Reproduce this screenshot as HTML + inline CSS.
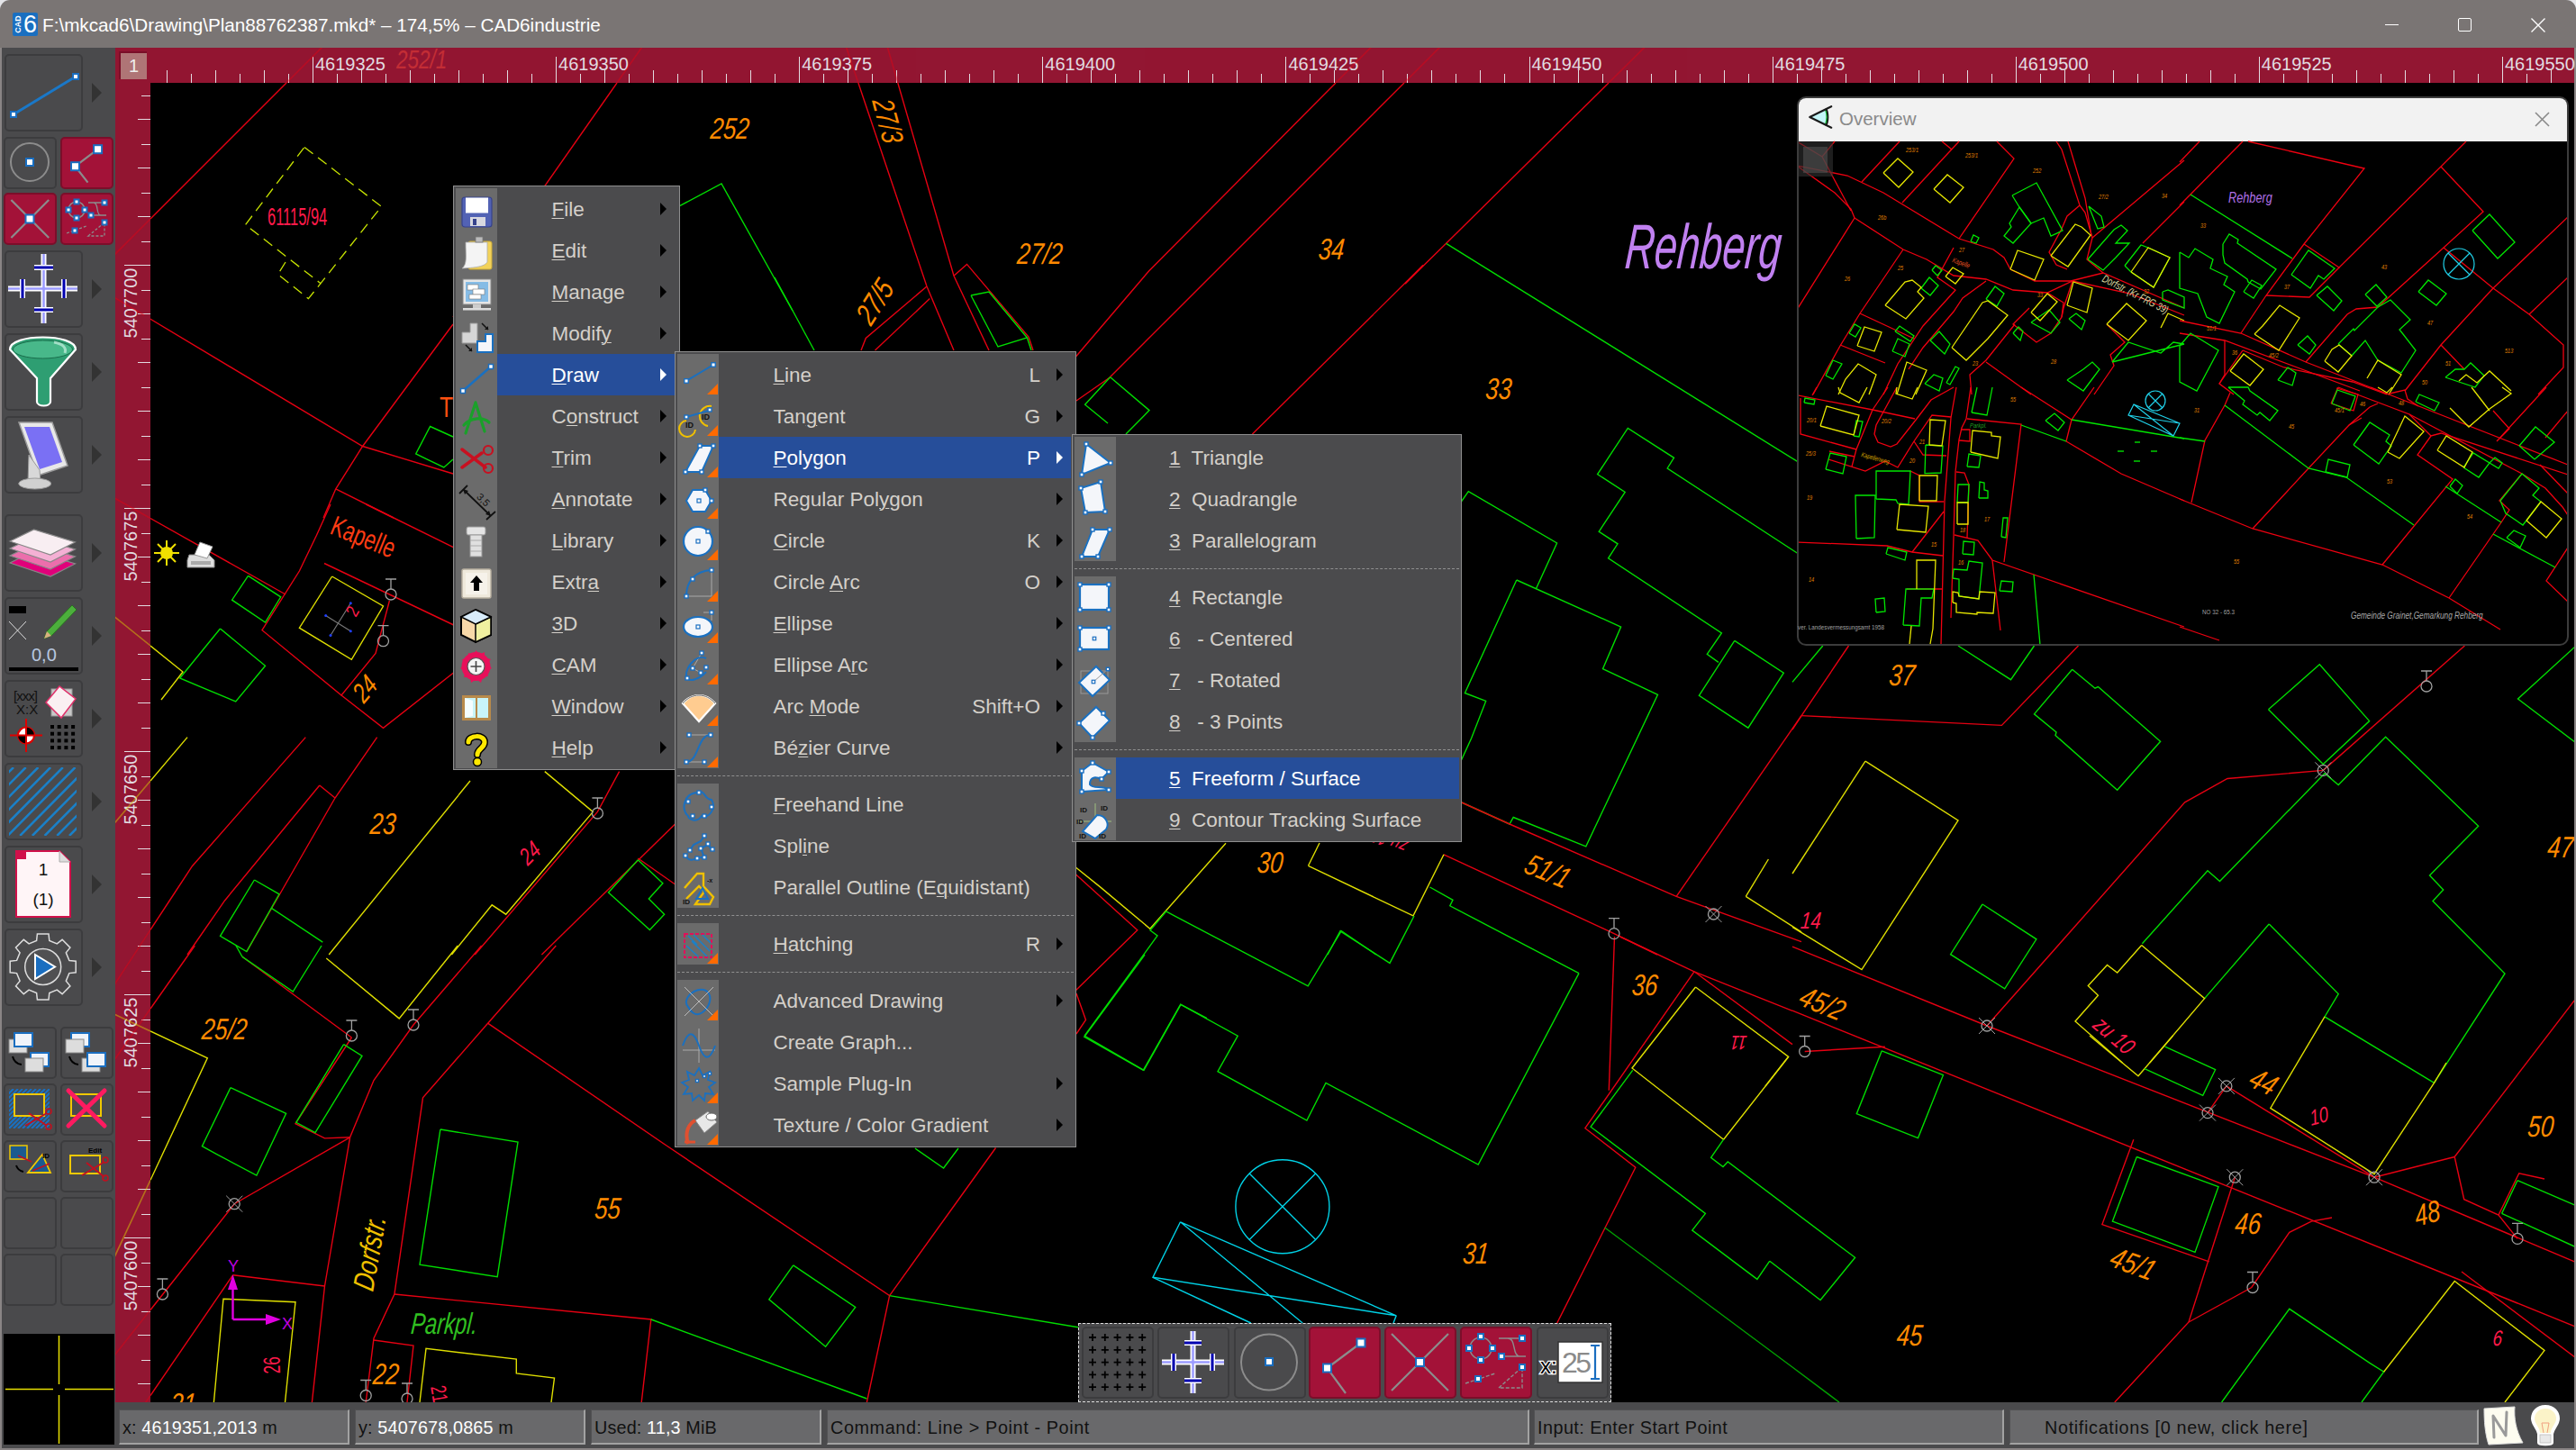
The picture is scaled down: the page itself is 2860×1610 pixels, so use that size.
<!DOCTYPE html><html><head><meta charset="utf-8"><style>*{box-sizing:border-box;margin:0;padding:0}
html,body{width:2860px;height:1610px;overflow:hidden;background:#e4e4e8;font-family:"Liberation Sans",sans-serif}
.a{position:absolute}
#win{position:absolute;left:0;top:0;width:2860px;height:1610px;background:#7a7574;border-radius:11px 11px 0 0;overflow:hidden}
#title{left:47px;top:15px;font-size:20.7px;color:#fff;white-space:pre;line-height:26px}
svg{position:absolute;overflow:visible}
.fld{position:absolute;top:7px;height:39px;background:#69696b;border-style:solid;border-width:1px 2px 2px 1px;border-color:#515153 #a2a2a2 #a2a2a2 #515153;font-size:19.8px;color:#111;white-space:pre;line-height:38px;padding-left:3px}
.menu{position:absolute;background:#4b4b4d;border:1px solid #8e8e8e}
.strip{position:absolute;width:46px;background:#6b6b6b}
.mi{position:absolute;height:46px;color:#d4d0ca;font-size:22.5px;line-height:48px;white-space:pre}
.mi.hl{background:#264e9a;color:#fff}
.mi u{text-decoration:underline;text-underline-offset:2px;text-decoration-thickness:1px}
.arr{position:absolute;top:16px;width:0;height:0;border-top:7px solid transparent;border-bottom:7px solid transparent;border-left:7px solid #000}
.hl .arr{border-left-color:#fff}
.sc{position:absolute;white-space:pre}
.sep{position:absolute;height:0;border-top:1px dashed #909090}
.btn{position:absolute;background:#4a4a4c;border:2px solid #3e3e40;border-radius:4px}
.btn.r{background:#a31238;border-color:#84102e}
.tarr{position:absolute;left:102px;width:0;height:0;border-top:12px solid transparent;border-bottom:12px solid transparent;border-left:12px solid #333}
.fld b{font-weight:normal;color:#fff}
.fld:last-child{}
</style></head><body><div id="win"><div class="a" id="title">F:\mkcad6\Drawing\Plan88762387.mkd* – 174,5% – CAD6industrie</div><div class="a" style="left:14px;top:14px;width:28px;height:26px;background:#1a6fc0;border-radius:2px"></div><div class="a" style="left:14px;top:14px;width:28px;height:26px;overflow:hidden"><div class="a" style="left:-4px;top:8px;width:20px;font-size:9px;font-weight:bold;color:#fff;transform:rotate(-90deg);text-align:center">CAD</div><div class="a" style="left:12px;top:-2px;font-size:27px;color:#fff;line-height:30px">6</div></div><div class="a" style="left:2648px;top:27px;width:15px;height:1px;background:#fff"></div><div class="a" style="left:2729px;top:20px;width:15px;height:15px;border:1.5px solid #fff;border-radius:2px"></div><svg style="left:2810px;top:20px" width="16" height="16"><path d="M0.5 0.5L15.5 15.5M15.5 0.5L0.5 15.5" stroke="#fff" stroke-width="1.4"/></svg><div class="a" style="left:0;top:53px;width:2px;height:1557px;background:#8a8585"></div><div class="a" style="left:2858px;top:53px;width:2px;height:1557px;background:#8a8585"></div><div class="a" style="left:0;top:1608px;width:2860px;height:2px;background:#8a8585"></div><div class="a" style="left:2px;top:53px;width:126px;height:1555px;background:#4a4a4c"></div><div class="a" style="left:128px;top:53px;width:2730px;height:39px;background:#921632"></div><div class="a" style="left:128px;top:92px;width:39px;height:1465px;background:#921632"></div><div class="a" id="canvas" style="left:167px;top:92px;width:2691px;height:1465px;background:#000;overflow:hidden"></div><div class="a" style="left:128px;top:1557px;width:2730px;height:51px;background:#4a4a4c"></div><svg style="left:0;top:0" width="2860" height="1610"><line x1="185.5" y1="78" x2="185.5" y2="92" stroke="#e2dbe0" stroke-width="1"/><line x1="212.5" y1="82" x2="212.5" y2="92" stroke="#e2dbe0" stroke-width="1"/><line x1="239.5" y1="78" x2="239.5" y2="92" stroke="#e2dbe0" stroke-width="1"/><line x1="266.5" y1="82" x2="266.5" y2="92" stroke="#e2dbe0" stroke-width="1"/><line x1="293.5" y1="78" x2="293.5" y2="92" stroke="#e2dbe0" stroke-width="1"/><line x1="320.5" y1="82" x2="320.5" y2="92" stroke="#e2dbe0" stroke-width="1"/><line x1="347.5" y1="63" x2="347.5" y2="92" stroke="#e2dbe0" stroke-width="1"/><text x="350.0" y="77.5" font-size="20" fill="#e2dbe0" font-family="Liberation Sans">4619325</text><line x1="374.5" y1="82" x2="374.5" y2="92" stroke="#e2dbe0" stroke-width="1"/><line x1="401.5" y1="78" x2="401.5" y2="92" stroke="#e2dbe0" stroke-width="1"/><line x1="428.5" y1="82" x2="428.5" y2="92" stroke="#e2dbe0" stroke-width="1"/><line x1="455.5" y1="78" x2="455.5" y2="92" stroke="#e2dbe0" stroke-width="1"/><line x1="482.5" y1="82" x2="482.5" y2="92" stroke="#e2dbe0" stroke-width="1"/><line x1="509.5" y1="78" x2="509.5" y2="92" stroke="#e2dbe0" stroke-width="1"/><line x1="536.5" y1="82" x2="536.5" y2="92" stroke="#e2dbe0" stroke-width="1"/><line x1="563.5" y1="78" x2="563.5" y2="92" stroke="#e2dbe0" stroke-width="1"/><line x1="590.5" y1="82" x2="590.5" y2="92" stroke="#e2dbe0" stroke-width="1"/><line x1="617.5" y1="63" x2="617.5" y2="92" stroke="#e2dbe0" stroke-width="1"/><text x="620.1" y="77.5" font-size="20" fill="#e2dbe0" font-family="Liberation Sans">4619350</text><line x1="644.5" y1="82" x2="644.5" y2="92" stroke="#e2dbe0" stroke-width="1"/><line x1="671.5" y1="78" x2="671.5" y2="92" stroke="#e2dbe0" stroke-width="1"/><line x1="698.5" y1="82" x2="698.5" y2="92" stroke="#e2dbe0" stroke-width="1"/><line x1="725.5" y1="78" x2="725.5" y2="92" stroke="#e2dbe0" stroke-width="1"/><line x1="752.5" y1="82" x2="752.5" y2="92" stroke="#e2dbe0" stroke-width="1"/><line x1="779.5" y1="78" x2="779.5" y2="92" stroke="#e2dbe0" stroke-width="1"/><line x1="806.5" y1="82" x2="806.5" y2="92" stroke="#e2dbe0" stroke-width="1"/><line x1="833.5" y1="78" x2="833.5" y2="92" stroke="#e2dbe0" stroke-width="1"/><line x1="860.5" y1="82" x2="860.5" y2="92" stroke="#e2dbe0" stroke-width="1"/><line x1="887.5" y1="63" x2="887.5" y2="92" stroke="#e2dbe0" stroke-width="1"/><text x="890.2" y="77.5" font-size="20" fill="#e2dbe0" font-family="Liberation Sans">4619375</text><line x1="914.5" y1="82" x2="914.5" y2="92" stroke="#e2dbe0" stroke-width="1"/><line x1="941.5" y1="78" x2="941.5" y2="92" stroke="#e2dbe0" stroke-width="1"/><line x1="968.5" y1="82" x2="968.5" y2="92" stroke="#e2dbe0" stroke-width="1"/><line x1="995.5" y1="78" x2="995.5" y2="92" stroke="#e2dbe0" stroke-width="1"/><line x1="1022.5" y1="82" x2="1022.5" y2="92" stroke="#e2dbe0" stroke-width="1"/><line x1="1049.5" y1="78" x2="1049.5" y2="92" stroke="#e2dbe0" stroke-width="1"/><line x1="1076.5" y1="82" x2="1076.5" y2="92" stroke="#e2dbe0" stroke-width="1"/><line x1="1103.5" y1="78" x2="1103.5" y2="92" stroke="#e2dbe0" stroke-width="1"/><line x1="1130.5" y1="82" x2="1130.5" y2="92" stroke="#e2dbe0" stroke-width="1"/><line x1="1157.5" y1="63" x2="1157.5" y2="92" stroke="#e2dbe0" stroke-width="1"/><text x="1160.3" y="77.5" font-size="20" fill="#e2dbe0" font-family="Liberation Sans">4619400</text><line x1="1184.5" y1="82" x2="1184.5" y2="92" stroke="#e2dbe0" stroke-width="1"/><line x1="1211.5" y1="78" x2="1211.5" y2="92" stroke="#e2dbe0" stroke-width="1"/><line x1="1238.5" y1="82" x2="1238.5" y2="92" stroke="#e2dbe0" stroke-width="1"/><line x1="1265.5" y1="78" x2="1265.5" y2="92" stroke="#e2dbe0" stroke-width="1"/><line x1="1292.5" y1="82" x2="1292.5" y2="92" stroke="#e2dbe0" stroke-width="1"/><line x1="1319.5" y1="78" x2="1319.5" y2="92" stroke="#e2dbe0" stroke-width="1"/><line x1="1346.5" y1="82" x2="1346.5" y2="92" stroke="#e2dbe0" stroke-width="1"/><line x1="1373.5" y1="78" x2="1373.5" y2="92" stroke="#e2dbe0" stroke-width="1"/><line x1="1400.5" y1="82" x2="1400.5" y2="92" stroke="#e2dbe0" stroke-width="1"/><line x1="1427.5" y1="63" x2="1427.5" y2="92" stroke="#e2dbe0" stroke-width="1"/><text x="1430.4" y="77.5" font-size="20" fill="#e2dbe0" font-family="Liberation Sans">4619425</text><line x1="1454.5" y1="82" x2="1454.5" y2="92" stroke="#e2dbe0" stroke-width="1"/><line x1="1481.5" y1="78" x2="1481.5" y2="92" stroke="#e2dbe0" stroke-width="1"/><line x1="1508.5" y1="82" x2="1508.5" y2="92" stroke="#e2dbe0" stroke-width="1"/><line x1="1535.5" y1="78" x2="1535.5" y2="92" stroke="#e2dbe0" stroke-width="1"/><line x1="1562.5" y1="82" x2="1562.5" y2="92" stroke="#e2dbe0" stroke-width="1"/><line x1="1589.5" y1="78" x2="1589.5" y2="92" stroke="#e2dbe0" stroke-width="1"/><line x1="1616.5" y1="82" x2="1616.5" y2="92" stroke="#e2dbe0" stroke-width="1"/><line x1="1643.5" y1="78" x2="1643.5" y2="92" stroke="#e2dbe0" stroke-width="1"/><line x1="1670.5" y1="82" x2="1670.5" y2="92" stroke="#e2dbe0" stroke-width="1"/><line x1="1698.5" y1="63" x2="1698.5" y2="92" stroke="#e2dbe0" stroke-width="1"/><text x="1700.5" y="77.5" font-size="20" fill="#e2dbe0" font-family="Liberation Sans">4619450</text><line x1="1725.5" y1="82" x2="1725.5" y2="92" stroke="#e2dbe0" stroke-width="1"/><line x1="1752.5" y1="78" x2="1752.5" y2="92" stroke="#e2dbe0" stroke-width="1"/><line x1="1779.5" y1="82" x2="1779.5" y2="92" stroke="#e2dbe0" stroke-width="1"/><line x1="1806.5" y1="78" x2="1806.5" y2="92" stroke="#e2dbe0" stroke-width="1"/><line x1="1833.5" y1="82" x2="1833.5" y2="92" stroke="#e2dbe0" stroke-width="1"/><line x1="1860.5" y1="78" x2="1860.5" y2="92" stroke="#e2dbe0" stroke-width="1"/><line x1="1887.5" y1="82" x2="1887.5" y2="92" stroke="#e2dbe0" stroke-width="1"/><line x1="1914.5" y1="78" x2="1914.5" y2="92" stroke="#e2dbe0" stroke-width="1"/><line x1="1941.5" y1="82" x2="1941.5" y2="92" stroke="#e2dbe0" stroke-width="1"/><line x1="1968.5" y1="63" x2="1968.5" y2="92" stroke="#e2dbe0" stroke-width="1"/><text x="1970.6" y="77.5" font-size="20" fill="#e2dbe0" font-family="Liberation Sans">4619475</text><line x1="1995.5" y1="82" x2="1995.5" y2="92" stroke="#e2dbe0" stroke-width="1"/><line x1="2022.5" y1="78" x2="2022.5" y2="92" stroke="#e2dbe0" stroke-width="1"/><line x1="2049.5" y1="82" x2="2049.5" y2="92" stroke="#e2dbe0" stroke-width="1"/><line x1="2076.5" y1="78" x2="2076.5" y2="92" stroke="#e2dbe0" stroke-width="1"/><line x1="2103.5" y1="82" x2="2103.5" y2="92" stroke="#e2dbe0" stroke-width="1"/><line x1="2130.5" y1="78" x2="2130.5" y2="92" stroke="#e2dbe0" stroke-width="1"/><line x1="2157.5" y1="82" x2="2157.5" y2="92" stroke="#e2dbe0" stroke-width="1"/><line x1="2184.5" y1="78" x2="2184.5" y2="92" stroke="#e2dbe0" stroke-width="1"/><line x1="2211.5" y1="82" x2="2211.5" y2="92" stroke="#e2dbe0" stroke-width="1"/><line x1="2238.5" y1="63" x2="2238.5" y2="92" stroke="#e2dbe0" stroke-width="1"/><text x="2240.7" y="77.5" font-size="20" fill="#e2dbe0" font-family="Liberation Sans">4619500</text><line x1="2265.5" y1="82" x2="2265.5" y2="92" stroke="#e2dbe0" stroke-width="1"/><line x1="2292.5" y1="78" x2="2292.5" y2="92" stroke="#e2dbe0" stroke-width="1"/><line x1="2319.5" y1="82" x2="2319.5" y2="92" stroke="#e2dbe0" stroke-width="1"/><line x1="2346.5" y1="78" x2="2346.5" y2="92" stroke="#e2dbe0" stroke-width="1"/><line x1="2373.5" y1="82" x2="2373.5" y2="92" stroke="#e2dbe0" stroke-width="1"/><line x1="2400.5" y1="78" x2="2400.5" y2="92" stroke="#e2dbe0" stroke-width="1"/><line x1="2427.5" y1="82" x2="2427.5" y2="92" stroke="#e2dbe0" stroke-width="1"/><line x1="2454.5" y1="78" x2="2454.5" y2="92" stroke="#e2dbe0" stroke-width="1"/><line x1="2481.5" y1="82" x2="2481.5" y2="92" stroke="#e2dbe0" stroke-width="1"/><line x1="2508.5" y1="63" x2="2508.5" y2="92" stroke="#e2dbe0" stroke-width="1"/><text x="2510.8" y="77.5" font-size="20" fill="#e2dbe0" font-family="Liberation Sans">4619525</text><line x1="2535.5" y1="82" x2="2535.5" y2="92" stroke="#e2dbe0" stroke-width="1"/><line x1="2562.5" y1="78" x2="2562.5" y2="92" stroke="#e2dbe0" stroke-width="1"/><line x1="2589.5" y1="82" x2="2589.5" y2="92" stroke="#e2dbe0" stroke-width="1"/><line x1="2616.5" y1="78" x2="2616.5" y2="92" stroke="#e2dbe0" stroke-width="1"/><line x1="2643.5" y1="82" x2="2643.5" y2="92" stroke="#e2dbe0" stroke-width="1"/><line x1="2670.5" y1="78" x2="2670.5" y2="92" stroke="#e2dbe0" stroke-width="1"/><line x1="2697.5" y1="82" x2="2697.5" y2="92" stroke="#e2dbe0" stroke-width="1"/><line x1="2724.5" y1="78" x2="2724.5" y2="92" stroke="#e2dbe0" stroke-width="1"/><line x1="2751.5" y1="82" x2="2751.5" y2="92" stroke="#e2dbe0" stroke-width="1"/><line x1="2778.5" y1="63" x2="2778.5" y2="92" stroke="#e2dbe0" stroke-width="1"/><text x="2780.9" y="77.5" font-size="20" fill="#e2dbe0" font-family="Liberation Sans">4619550</text><line x1="2805.5" y1="82" x2="2805.5" y2="92" stroke="#e2dbe0" stroke-width="1"/><line x1="2832.5" y1="78" x2="2832.5" y2="92" stroke="#e2dbe0" stroke-width="1"/><line x1="157" y1="106.5" x2="167" y2="106.5" stroke="#e2dbe0" stroke-width="1"/><line x1="153" y1="132.5" x2="167" y2="132.5" stroke="#e2dbe0" stroke-width="1"/><line x1="157" y1="160.5" x2="167" y2="160.5" stroke="#e2dbe0" stroke-width="1"/><line x1="153" y1="186.5" x2="167" y2="186.5" stroke="#e2dbe0" stroke-width="1"/><line x1="157" y1="214.5" x2="167" y2="214.5" stroke="#e2dbe0" stroke-width="1"/><line x1="153" y1="240.5" x2="167" y2="240.5" stroke="#e2dbe0" stroke-width="1"/><line x1="157" y1="268.5" x2="167" y2="268.5" stroke="#e2dbe0" stroke-width="1"/><line x1="138" y1="294.5" x2="167" y2="294.5" stroke="#e2dbe0" stroke-width="1"/><text transform="translate(151.5,297.5) rotate(-90)" text-anchor="end" font-size="20" fill="#e2dbe0" font-family="Liberation Sans">5407700</text><line x1="157" y1="322.5" x2="167" y2="322.5" stroke="#e2dbe0" stroke-width="1"/><line x1="153" y1="348.5" x2="167" y2="348.5" stroke="#e2dbe0" stroke-width="1"/><line x1="157" y1="376.5" x2="167" y2="376.5" stroke="#e2dbe0" stroke-width="1"/><line x1="153" y1="402.5" x2="167" y2="402.5" stroke="#e2dbe0" stroke-width="1"/><line x1="157" y1="430.5" x2="167" y2="430.5" stroke="#e2dbe0" stroke-width="1"/><line x1="153" y1="456.5" x2="167" y2="456.5" stroke="#e2dbe0" stroke-width="1"/><line x1="157" y1="484.5" x2="167" y2="484.5" stroke="#e2dbe0" stroke-width="1"/><line x1="153" y1="510.5" x2="167" y2="510.5" stroke="#e2dbe0" stroke-width="1"/><line x1="157" y1="538.5" x2="167" y2="538.5" stroke="#e2dbe0" stroke-width="1"/><line x1="138" y1="564.5" x2="167" y2="564.5" stroke="#e2dbe0" stroke-width="1"/><text transform="translate(151.5,567.5) rotate(-90)" text-anchor="end" font-size="20" fill="#e2dbe0" font-family="Liberation Sans">5407675</text><line x1="157" y1="592.5" x2="167" y2="592.5" stroke="#e2dbe0" stroke-width="1"/><line x1="153" y1="618.5" x2="167" y2="618.5" stroke="#e2dbe0" stroke-width="1"/><line x1="157" y1="646.5" x2="167" y2="646.5" stroke="#e2dbe0" stroke-width="1"/><line x1="153" y1="672.5" x2="167" y2="672.5" stroke="#e2dbe0" stroke-width="1"/><line x1="157" y1="700.5" x2="167" y2="700.5" stroke="#e2dbe0" stroke-width="1"/><line x1="153" y1="726.5" x2="167" y2="726.5" stroke="#e2dbe0" stroke-width="1"/><line x1="157" y1="754.5" x2="167" y2="754.5" stroke="#e2dbe0" stroke-width="1"/><line x1="153" y1="780.5" x2="167" y2="780.5" stroke="#e2dbe0" stroke-width="1"/><line x1="157" y1="808.5" x2="167" y2="808.5" stroke="#e2dbe0" stroke-width="1"/><line x1="138" y1="834.5" x2="167" y2="834.5" stroke="#e2dbe0" stroke-width="1"/><text transform="translate(151.5,837.5) rotate(-90)" text-anchor="end" font-size="20" fill="#e2dbe0" font-family="Liberation Sans">5407650</text><line x1="157" y1="862.5" x2="167" y2="862.5" stroke="#e2dbe0" stroke-width="1"/><line x1="153" y1="888.5" x2="167" y2="888.5" stroke="#e2dbe0" stroke-width="1"/><line x1="157" y1="916.5" x2="167" y2="916.5" stroke="#e2dbe0" stroke-width="1"/><line x1="153" y1="942.5" x2="167" y2="942.5" stroke="#e2dbe0" stroke-width="1"/><line x1="157" y1="970.5" x2="167" y2="970.5" stroke="#e2dbe0" stroke-width="1"/><line x1="153" y1="996.5" x2="167" y2="996.5" stroke="#e2dbe0" stroke-width="1"/><line x1="157" y1="1024.5" x2="167" y2="1024.5" stroke="#e2dbe0" stroke-width="1"/><line x1="153" y1="1050.5" x2="167" y2="1050.5" stroke="#e2dbe0" stroke-width="1"/><line x1="157" y1="1078.5" x2="167" y2="1078.5" stroke="#e2dbe0" stroke-width="1"/><line x1="138" y1="1104.5" x2="167" y2="1104.5" stroke="#e2dbe0" stroke-width="1"/><text transform="translate(151.5,1107.5) rotate(-90)" text-anchor="end" font-size="20" fill="#e2dbe0" font-family="Liberation Sans">5407625</text><line x1="157" y1="1132.5" x2="167" y2="1132.5" stroke="#e2dbe0" stroke-width="1"/><line x1="153" y1="1158.5" x2="167" y2="1158.5" stroke="#e2dbe0" stroke-width="1"/><line x1="157" y1="1186.5" x2="167" y2="1186.5" stroke="#e2dbe0" stroke-width="1"/><line x1="153" y1="1212.5" x2="167" y2="1212.5" stroke="#e2dbe0" stroke-width="1"/><line x1="157" y1="1240.5" x2="167" y2="1240.5" stroke="#e2dbe0" stroke-width="1"/><line x1="153" y1="1266.5" x2="167" y2="1266.5" stroke="#e2dbe0" stroke-width="1"/><line x1="157" y1="1294.5" x2="167" y2="1294.5" stroke="#e2dbe0" stroke-width="1"/><line x1="153" y1="1320.5" x2="167" y2="1320.5" stroke="#e2dbe0" stroke-width="1"/><line x1="157" y1="1348.5" x2="167" y2="1348.5" stroke="#e2dbe0" stroke-width="1"/><line x1="138" y1="1374.5" x2="167" y2="1374.5" stroke="#e2dbe0" stroke-width="1"/><text transform="translate(151.5,1377.5) rotate(-90)" text-anchor="end" font-size="20" fill="#e2dbe0" font-family="Liberation Sans">5407600</text><line x1="157" y1="1402.5" x2="167" y2="1402.5" stroke="#e2dbe0" stroke-width="1"/><line x1="153" y1="1428.5" x2="167" y2="1428.5" stroke="#e2dbe0" stroke-width="1"/><line x1="157" y1="1456.5" x2="167" y2="1456.5" stroke="#e2dbe0" stroke-width="1"/><line x1="153" y1="1482.5" x2="167" y2="1482.5" stroke="#e2dbe0" stroke-width="1"/><line x1="157" y1="1510.5" x2="167" y2="1510.5" stroke="#e2dbe0" stroke-width="1"/><line x1="153" y1="1536.5" x2="167" y2="1536.5" stroke="#e2dbe0" stroke-width="1"/></svg><div class="a" style="left:132px;top:57px;width:31px;height:31px;background:#b07677;border:2px solid #7a1028;border-width:2px 0 0 2px;color:#eee;font-size:20px;text-align:center;line-height:29px">1</div><svg style="left:0;top:0" width="2860" height="1610"><defs><clipPath id="rl"><path d="M128 53H2858V92H167V1557H128Z"/></clipPath></defs><g clip-path="url(#rl)" opacity="0.45" stroke-width="1.6"><line x1="167.0" y1="243.0" x2="82.1" y2="327.9" stroke="#e60012"/><line x1="318.0" y1="92.0" x2="402.9" y2="7.1" stroke="#e60012"/><line x1="160.0" y1="350.0" x2="57.1" y2="288.3" stroke="#e60012"/><line x1="685.0" y1="92.0" x2="753.8" y2="-6.3" stroke="#e60012"/><line x1="952.9" y1="92.0" x2="914.6" y2="-21.7" stroke="#e60012"/><line x1="996.8" y1="92.0" x2="963.4" y2="-23.2" stroke="#e60012"/><line x1="1483.0" y1="92.0" x2="1567.5" y2="6.8" stroke="#e60012"/><line x1="1559.0" y1="92.0" x2="1643.8" y2="7.1" stroke="#e60012"/><line x1="1786.0" y1="92.0" x2="1871.3" y2="7.6" stroke="#e60012"/><line x1="167.0" y1="575.5" x2="62.4" y2="516.6" stroke="#e60012"/><line x1="167.0" y1="717.0" x2="73.5" y2="641.7" stroke="#dede00"/><line x1="167.0" y1="867.0" x2="89.4" y2="958.6" stroke="#dede00"/><line x1="167.0" y1="1032.4" x2="101.2" y2="1132.7" stroke="#e60012"/><line x1="167.0" y1="1120.0" x2="97.9" y2="1218.1" stroke="#e60012"/><line x1="167.0" y1="1454.5" x2="92.5" y2="1548.6" stroke="#e60012"/><line x1="167.0" y1="1145.0" x2="58.5" y2="1093.7" stroke="#dede00"/><line x1="167.0" y1="1310.3" x2="116.2" y2="1419.0" stroke="#dede00"/><line x1="167.0" y1="1549.5" x2="99.2" y2="1648.5" stroke="#e60012"/><text transform="translate(440,76) scale(0.75,1)" font-family="Liberation Sans" font-style="italic" font-size="30" fill="#ff4a3a">252/1</text></g></svg><svg style="left:0;top:0" width="2860" height="1610"><defs><clipPath id="cv"><rect x="167" y="92" width="2691" height="1465"/></clipPath></defs><g clip-path="url(#cv)" fill="none" stroke-width="1.4" stroke-linejoin="miter"><polyline stroke="#e60012" points="167.0,243.0 318.0,92.0"/><polyline stroke="#e60012" points="160.0,350.0 402.6,495.5 503.0,526.0"/><polyline stroke="#e60012" points="685.0,92.0 503.0,352.0"/><polyline stroke="#e60012" points="503.0,360.0 402.6,495.5 372.8,542.8 359.0,575.0"/><polyline stroke="#e60012" points="372.8,542.8 437.0,575.0"/><polyline stroke="#00dc00" points="754.6,228.6 801.0,204.0 880.0,345.0"/><polyline stroke="#00dc00" points="503.0,485.0 477.6,473.5 461.7,504.0 492.8,519.0 503.0,510.0"/><polyline stroke="#e60012" points="952.9,92.0 1029.0,318.0 1059.0,389.0"/><polyline stroke="#e60012" points="996.8,92.0 1059.0,306.3 1098.0,389.0"/><polyline stroke="#e60012" points="1059.0,306.3 1073.5,293.4 1142.0,374.0 1147.0,389.0"/><polyline stroke="#e60012" points="1029.0,318.0 961.3,375.5 956.0,389.0"/><polyline stroke="#e60012" points="1032.3,331.6 971.5,389.0"/><polyline stroke="#00dc00" points="860.0,308.0 904.0,389.0"/><polyline stroke="#00dc00" points="1078.0,328.0 1098.0,324.0 1140.4,375.0 1108.0,385.0 1078.0,328.0"/><polyline stroke="#00dc00" points="1140.4,375.0 1145.0,389.0"/><polyline stroke="#e60012" points="1483.0,92.0 1275.5,301.0 1194.5,396.0"/><polyline stroke="#e60012" points="1559.0,92.0 1231.6,419.5 1195.0,445.0"/><polyline stroke="#e60012" points="1580.0,294.5 1390.4,482.0"/><polyline stroke="#00dc00" points="1232.6,418.8 1276.0,455.6 1250.0,482.0"/><polyline stroke="#00dc00" points="1232.6,418.8 1204.6,449.2 1230.0,470.0"/><polyline stroke="#e60012" points="1786.0,92.0 1605.6,270.3 1560.0,314.9"/><polyline stroke="#e60012" points="1580.0,294.5 1560.0,314.9"/><polyline stroke="#00dc00" points="1605.6,270.3 1996.0,512.7"/><polyline stroke="#00dc00" points="1995.2,614.0 1851.2,520.0 1858.5,508.3 1807.3,475.4 1773.6,526.6 1804.2,546.4 1775.2,590.3 1796.0,603.8 1785.6,619.8 1911.4,703.0 1895.3,726.4 1907.9,735.4"/><polyline stroke="#e60012" points="167.0,575.5 317.0,660.0"/><polyline stroke="#e60012" points="367.0,560.0 351.4,594.5 332.4,634.0 291.0,699.7 379.0,772.0 417.0,725.5 432.4,667.0"/><polyline stroke="#e60012" points="360.0,625.5 504.8,694.5"/><polyline stroke="#e60012" points="406.6,560.0 504.8,608.3"/><polyline stroke="#dede00" points="368.6,640.0 425.5,673.0 390.3,732.4 332.4,697.2 368.6,640.0"/><polyline stroke="#00dc00" points="275.5,639.3 311.7,662.8 294.5,691.0 257.6,666.2 275.5,639.3"/><polyline stroke="#00dc00" points="244.5,698.0 294.5,739.3 261.7,779.0 199.7,753.0 244.5,698.0"/><polyline stroke="#dede00" points="167.0,717.0 203.0,746.0 179.0,777.0"/><polyline stroke="#dede00" points="208.0,818.6 167.0,867.0"/><polyline stroke="#e60012" points="504.8,746.0 425.5,808.3 379.0,772.0"/><polyline stroke="#e60012" points="339.3,818.6 213.4,961.7 187.6,1001.0 167.0,1032.4"/><polyline stroke="#e60012" points="418.6,818.6 372.0,886.0 311.7,991.0 273.8,1056.6"/><polyline stroke="#e60012" points="354.8,872.0 372.0,886.0"/><polyline stroke="#e60012" points="354.8,872.0 249.7,999.7 208.0,1060.0"/><polyline stroke="#00dc00" points="282.4,977.0 310.0,992.8 273.8,1056.6 244.5,1039.3 282.4,977.0"/><polyline stroke="#00dc00" points="301.4,1008.3 358.3,1046.2"/><polyline stroke="#dede00" points="522.0,867.0 365.2,1060.0"/><polyline stroke="#dede00" points="604.8,856.6 658.3,901.4 561.7,1015.2 546.2,1004.8 501.4,1060.0"/><polyline stroke="#e60012" points="687.6,856.6 663.4,901.4 527.2,1060.0"/><polyline stroke="#e60012" points="760.0,904.8 601.4,1060.0"/><polyline stroke="#00dc00" points="708.3,954.8 735.9,980.7 720.3,998.0 737.6,1015.2 721.4,1032.4 675.5,991.0 708.3,954.8"/><polyline stroke="#e60012" points="708.3,953.0 760.0,989.3"/><polyline stroke="#00dc00" points="1621.0,559.0 1630.3,545.6 1728.6,603.0 1705.3,654.0"/><polyline stroke="#00dc00" points="1683.8,644.0 1799.6,696.0 1779.5,742.6 1840.5,771.3 1760.8,939.8 1680.2,907.5 1676.0,915.0 1622.8,891.0"/><polyline stroke="#00dc00" points="1683.8,644.0 1626.4,769.5 1649.7,778.4 1633.6,819.7 1622.0,845.0"/><polyline stroke="#00dc00" points="1925.8,711.4 1980.3,747.2 1940.9,808.2 1886.4,772.3 1925.8,711.4"/><polyline stroke="#e60012" points="1861.2,995.4 2000.0,794.6"/><polyline stroke="#e60012" points="1622.8,891.0 1676.0,915.0 1861.2,995.4 2000.0,1045.6"/><polyline stroke="#e60012" points="1603.0,948.8 1792.0,1036.6 1840.0,1060.0"/><polyline stroke="#dede00" points="1452.5,961.3 1569.0,1016.9 1603.0,948.8"/><polyline stroke="#dede00" points="1452.5,961.3 1465.0,936.0"/><polyline stroke="#dede00" points="1194.3,963.0 1221.2,984.6 1276.8,1031.2 1361.0,936.2"/><polyline stroke="#e60012" points="1194.3,970.7 1262.8,1032.8 1194.3,1099.7"/><polyline stroke="#00dc00" points="1204.0,1150.2 1285.0,1039.0 1277.0,1033.0 1294.6,1012.0 1452.2,1094.9 1488.8,1034.4 1543.0,1069.4 1570.0,1017.0"/><polyline stroke="#00dc00" points="1587.5,985.0 1613.0,999.4 1609.8,1005.8 1753.0,1080.6"/><polyline stroke="#00dc00" points="1488.4,1033.0 1474.0,1060.0"/><polyline stroke="#00dc00" points="1488.4,1033.0 1527.8,1060.0"/><polyline stroke="#dede00" points="1938.3,995.4 1963.4,954.0"/><polyline stroke="#dede00" points="1938.3,995.4 2000.0,1034.8"/><polyline stroke="#e60012" points="2052.5,717.0 2000.1,794.6 1990.0,810.0"/><polyline stroke="#e60012" points="2000.1,794.6 2222.4,805.4 2307.5,717.0"/><polyline stroke="#00dc00" points="2174.0,717.0 2232.5,754.7 2258.5,717.0"/><polyline stroke="#00dc00" points="1990.0,757.4 2023.8,717.0"/><polyline stroke="#00dc00" points="2300.7,743.2 2326.0,764.2 2329.4,762.5 2398.6,823.3 2350.7,877.3 2282.0,816.5 2283.0,813.0 2258.5,792.9 2300.7,743.2"/><polyline stroke="#dede00" points="2071.0,845.2 2174.0,911.0 2067.0,1076.6 1990.0,1029.3"/><polyline stroke="#dede00" points="2071.0,845.2 1990.0,970.0"/><polyline stroke="#00dc00" points="2201.0,1004.0 2260.9,1042.8 2225.7,1097.8 2165.6,1059.7 2201.0,1004.0"/><polyline stroke="#e60012" points="2579.3,855.4 2736.4,717.0"/><polyline stroke="#e60012" points="2579.3,855.4 2473.0,864.5 2425.7,890.8 2206.0,1139.0"/><polyline stroke="#e60012" points="1990.0,1051.2 2206.0,1139.0 2636.0,1307.2 2860.0,1401.6"/><polyline stroke="#e60012" points="1990.0,1122.2 2860.0,1473.2"/><polyline stroke="#00dc00" points="2518.5,787.8 2575.3,737.8 2630.6,800.6 2579.3,848.6 2518.5,787.8"/><polyline stroke="#00dc00" points="2378.4,1047.8 2451.0,966.8 2464.5,978.6 2581.0,858.7 2596.2,871.6 2648.6,818.2 2751.6,917.2 2697.5,971.9 2712.7,988.0 2701.0,1000.6 2781.0,1081.0 2702.5,1202.4"/><polyline stroke="#00dc00" points="2519.2,1026.0 2596.2,1103.6 2581.0,1128.9 2702.5,1202.4"/><polyline stroke="#00dc00" points="2519.2,1026.0 2447.6,1108.6"/><polyline stroke="#dede00" points="2377.7,1049.5 2447.6,1108.6 2386.8,1180.0"/><polyline stroke="#dede00" points="2377.7,1049.5 2350.7,1080.0 2339.5,1071.5 2318.3,1094.5 2329.4,1105.3 2304.0,1134.0 2356.4,1180.0"/><polyline stroke="#dede00" points="2581.0,1128.9 2520.8,1230.4 2636.0,1303.7 2702.5,1202.4 2716.0,1180.0"/><polyline stroke="#00dc00" points="2860.0,717.0 2795.5,776.0 2860.0,825.0"/><polyline stroke="#e60012" points="2860.0,1108.6 2725.2,1284.5"/><polyline stroke="#e60012" points="216.3,1050.0 167.0,1120.0"/><polyline stroke="#e60012" points="269.0,1062.3 390.4,1152.0"/><polyline stroke="#00dc00" points="269.0,1062.3 325.3,1101.0 357.0,1050.0"/><polyline stroke="#00dc00" points="262.0,1050.0 269.0,1062.3"/><polyline stroke="#dede00" points="362.3,1064.0 443.2,1130.9 508.2,1050.0"/><polyline stroke="#e60012" points="534.6,1050.0 459.0,1138.0 415.0,1199.5 388.6,1262.8 360.5,1428.0 346.4,1557.0"/><polyline stroke="#e60012" points="617.3,1050.0 541.6,1136.2 469.5,1218.8 437.9,1437.0 415.0,1486.0 406.2,1557.0"/><polyline stroke="#e60012" points="541.6,1136.2 740.0,1272.0"/><polyline stroke="#e60012" points="388.6,1262.8 260.2,1336.7 167.0,1454.5"/><polyline stroke="#e60012" points="388.6,1262.8 360.5,1263.9 328.0,1247.7 390.4,1152.0"/><polyline stroke="#00dc00" points="381.6,1159.7 402.0,1172.4 350.0,1257.5 328.8,1246.3 381.6,1159.7"/><polyline stroke="#00dc00" points="256.0,1207.6 317.6,1236.4 284.9,1305.0 240.2,1281.4 224.4,1272.7 256.0,1207.6"/><polyline stroke="#dede00" points="167.0,1145.0 230.3,1174.9 167.0,1310.3"/><polyline stroke="#00dc00" points="488.9,1254.0 575.0,1268.0 552.2,1417.6 466.0,1404.2 488.9,1254.0"/><polyline stroke="#e60012" points="437.9,1437.0 722.8,1465.0 712.2,1557.0"/><polyline stroke="#e60012" points="258.5,1415.8 360.5,1428.0"/><polyline stroke="#e60012" points="258.5,1415.8 167.0,1549.5"/><polyline stroke="#dede00" points="237.4,1557.0 248.0,1442.2 328.0,1445.7 316.5,1557.0"/><polyline stroke="#e60012" points="415.0,1488.0 459.0,1494.0 452.0,1557.0"/><polyline stroke="#dede00" points="466.0,1557.0 473.0,1497.4 573.3,1509.0 573.3,1525.0 615.5,1530.0 612.0,1557.0"/><polyline stroke="#e60012" points="740.0,1272.0 987.6,1438.6 1105.5,1274.5"/><polyline stroke="#e60012" points="987.6,1438.6 962.4,1557.0"/><polyline stroke="#00dc00" points="987.6,1438.6 1197.0,1473.8"/><polyline stroke="#00dc00" points="722.8,1465.0 962.4,1553.0"/><polyline stroke="#00dc00" points="880.7,1404.8 949.7,1451.4 916.6,1495.2 853.8,1442.8 880.7,1404.8"/><polyline stroke="#00dc00" points="1015.9,1275.0 1047.6,1297.0 1064.0,1275.0"/><polyline stroke="#00dc00" points="1271.0,1060.0 1203.8,1151.4 1269.3,1188.3 1310.7,1115.2 1340.0,1130.7"/><polyline stroke="#e60012" points="1195.0,1103.0 1205.5,1132.4 1195.0,1148.0"/><polyline stroke="#00dc00" points="1204.0,1150.2 1270.0,1188.4 1311.0,1115.5 1374.2,1150.2 1352.0,1189.7 1450.9,1244.0 1472.0,1202.4 1641.2,1293.0 1753.0,1080.6"/><polyline stroke="#00d2e6" points="1310.5,1356.8 1280.0,1418.3 1550.2,1460.8 1310.5,1356.8 1446.2,1469.0"/><polyline stroke="#00d2e6" points="1280.0,1418.3 1388.8,1469.0"/><polyline stroke="#00d2e6" points="1550.2,1460.8 1547.0,1469.0"/><polyline stroke="#e60012" points="1792.5,1040.0 1786.3,1210.8"/><polyline stroke="#e60012" points="1798.7,1040.0 1881.0,1078.8 1990.0,1122.3"/><polyline stroke="#e60012" points="1881.0,1078.8 1990.0,1159.6"/><polyline stroke="#e60012" points="1881.0,1078.8 1759.9,1252.7 1815.8,1296.2 1728.8,1469.0 1724.0,1557.0"/><polyline stroke="#dede00" points="1882.5,1096.0 1985.7,1173.5 1913.6,1265.2 1812.0,1186.0 1882.5,1096.0"/><polyline stroke="#00dc00" points="1812.7,1188.4 1766.1,1251.2 1893.4,1347.5 1878.8,1366.0 1950.9,1420.4 1964.8,1400.2"/><polyline stroke="#00dc00" points="1913.6,1265.2 1899.6,1285.3 1913.0,1295.6 1918.3,1290.0 2059.6,1396.3 2021.1,1443.5 1964.8,1400.2"/><polyline stroke="#00a000" points="1781.6,1363.0 1990.0,1518.0"/><polyline stroke="#e60012" points="2636.0,1307.2 2725.2,1284.5"/><polyline stroke="#e60012" points="2725.2,1284.5 2735.7,1331.7 2774.0,1349.0 2795.0,1375.4"/><polyline stroke="#e60012" points="2774.0,1349.0 2796.8,1302.7 2825.0,1309.0"/><polyline stroke="#e60012" points="2471.9,1205.9 2636.0,1307.2"/><polyline stroke="#e60012" points="2471.9,1205.9 2451.0,1235.6"/><polyline stroke="#e60012" points="2003.7,1167.5 2092.8,1162.2"/><polyline stroke="#e60012" points="2368.8,1265.3 2333.9,1359.6 2452.7,1400.9"/><polyline stroke="#e60012" points="2481.3,1307.2 2430.0,1468.0 2347.8,1557.0"/><polyline stroke="#e60012" points="2430.0,1468.0 2499.8,1429.5 2541.8,1368.4 2566.2,1356.1 2589.0,1352.0"/><polyline stroke="#e60012" points="2733.0,1412.0 2860.0,1508.0"/><polyline stroke="#00dc00" points="2089.3,1166.8 2157.4,1193.7 2129.5,1263.6 2061.3,1236.7 2089.3,1166.8"/><polyline stroke="#00dc00" points="2372.3,1284.5 2463.0,1317.7 2437.0,1390.4 2345.4,1356.1 2372.3,1284.5"/><polyline stroke="#00a000" points="1990.0,1518.0 2042.0,1557.0"/><polyline stroke="#00dc00" points="2466.6,1557.0 2541.8,1453.3 2630.9,1513.4 2646.6,1523.2 2622.0,1557.0"/><polyline stroke="#dede00" points="2646.6,1523.2 2725.2,1422.5 2825.0,1499.4 2781.0,1557.0"/><polyline stroke="#dede00" points="2320.0,1150.0 2374.0,1194.7 2412.5,1150.0"/><polyline stroke="#00dc00" points="2403.7,1162.2 2459.6,1187.7 2445.7,1216.4 2381.0,1186.7"/><polyline stroke="#dede00" points="1960.0,1206.0 1985.2,1173.8"/><polyline stroke="#00dc00" points="2795.0,1310.7 2860.0,1338.7"/><polyline stroke="#00dc00" points="2777.6,1347.4 2860.0,1384.8"/><polyline stroke="#00dc00" points="2795.0,1310.7 2777.6,1347.4"/><polyline stroke="#c8e400" stroke-width="1.3" stroke-dasharray="12,7" points="338,163.4 423.5,229.3 356,314.7 272.5,249.5 338,163.4"/><polyline stroke="#c8e400" stroke-width="1.3" stroke-dasharray="12,7" points="317,291 308.6,304.6 342.4,331.6 356,314.7"/><circle cx="1423.9" cy="1339.7" r="52" stroke="#00d2e6"/><path d="M1387.1 1302.9L1460.7 1376.5M1460.7 1302.9L1387.1 1376.5" stroke="#00d2e6"/><path d="M361.7 683.4L389.3 700.7M367 705.5L389.3 669.7" stroke="#777" stroke-width="1.2"/><circle cx="361.7" cy="683.4" r="1.5" fill="#2040ff"/><circle cx="389.3" cy="700.7" r="1.5" fill="#2040ff"/><circle cx="367" cy="705.5" r="1.5" fill="#2040ff"/><circle cx="389.3" cy="669.7" r="1.5" fill="#2040ff"/><text transform="translate(395,686) rotate(-60) scale(0.8,1)" font-family="Liberation Sans" font-size="20" fill="#ff1a4a">2</text><text transform="translate(478,1540) rotate(80) scale(0.7,1)" font-family="Liberation Sans" font-size="24" fill="#ff1a4a">21</text><circle cx="434" cy="660" r="6" stroke="#a0a0a0" stroke-width="1.3"/><path d="M434 654V643M428 643H440" stroke="#a0a0a0" stroke-width="1.3"/><circle cx="425.5" cy="711.7" r="6" stroke="#a0a0a0" stroke-width="1.3"/><path d="M425.5 705.7V694.7M419.5 694.7H431.5" stroke="#a0a0a0" stroke-width="1.3"/><circle cx="663.4" cy="903" r="6" stroke="#a0a0a0" stroke-width="1.3"/><path d="M663.4 897V886M657.4 886H669.4" stroke="#a0a0a0" stroke-width="1.3"/><circle cx="390.4" cy="1150" r="6" stroke="#a0a0a0" stroke-width="1.3"/><path d="M390.4 1144V1133M384.4 1133H396.4" stroke="#a0a0a0" stroke-width="1.3"/><circle cx="459" cy="1138" r="6" stroke="#a0a0a0" stroke-width="1.3"/><path d="M459 1132V1121M453 1121H465" stroke="#a0a0a0" stroke-width="1.3"/><circle cx="180.4" cy="1437" r="6" stroke="#a0a0a0" stroke-width="1.3"/><path d="M180.4 1431V1420M174.4 1420H186.4" stroke="#a0a0a0" stroke-width="1.3"/><circle cx="406.2" cy="1549.5" r="6" stroke="#a0a0a0" stroke-width="1.3"/><path d="M406.2 1543.5V1532.5M400.2 1532.5H412.2" stroke="#a0a0a0" stroke-width="1.3"/><circle cx="452" cy="1553" r="6" stroke="#a0a0a0" stroke-width="1.3"/><path d="M452 1547V1536M446 1536H458" stroke="#a0a0a0" stroke-width="1.3"/><circle cx="1792" cy="1036.6" r="6" stroke="#a0a0a0" stroke-width="1.3"/><path d="M1792 1030.6V1019.5999999999999M1786 1019.5999999999999H1798" stroke="#a0a0a0" stroke-width="1.3"/><circle cx="2003.7" cy="1167.5" r="6" stroke="#a0a0a0" stroke-width="1.3"/><path d="M2003.7 1161.5V1150.5M1997.7 1150.5H2009.7" stroke="#a0a0a0" stroke-width="1.3"/><circle cx="2501" cy="1429.5" r="6" stroke="#a0a0a0" stroke-width="1.3"/><path d="M2501 1423.5V1412.5M2495 1412.5H2507" stroke="#a0a0a0" stroke-width="1.3"/><circle cx="2795" cy="1375.4" r="6" stroke="#a0a0a0" stroke-width="1.3"/><path d="M2795 1369.4V1358.4M2789 1358.4H2801" stroke="#a0a0a0" stroke-width="1.3"/><circle cx="2694" cy="762" r="6" stroke="#a0a0a0" stroke-width="1.3"/><path d="M2694 756V745M2688 745H2700" stroke="#a0a0a0" stroke-width="1.3"/><circle cx="260.2" cy="1336.7" r="6" stroke="#a0a0a0" stroke-width="1.3"/><path d="M251.2 1327.7L269.2 1345.7M269.2 1327.7L251.2 1345.7" stroke="#a0a0a0" stroke-width="1"/><circle cx="1902.5" cy="1015" r="6" stroke="#a0a0a0" stroke-width="1.3"/><path d="M1893.5 1006L1911.5 1024M1911.5 1006L1893.5 1024" stroke="#a0a0a0" stroke-width="1"/><circle cx="2206" cy="1139" r="6" stroke="#a0a0a0" stroke-width="1.3"/><path d="M2197 1130L2215 1148M2215 1130L2197 1148" stroke="#a0a0a0" stroke-width="1"/><circle cx="2579.3" cy="855.4" r="6" stroke="#a0a0a0" stroke-width="1.3"/><path d="M2570.3 846.4L2588.3 864.4M2588.3 846.4L2570.3 864.4" stroke="#a0a0a0" stroke-width="1"/><circle cx="2471.9" cy="1205.9" r="6" stroke="#a0a0a0" stroke-width="1.3"/><path d="M2462.9 1196.9L2480.9 1214.9M2480.9 1196.9L2462.9 1214.9" stroke="#a0a0a0" stroke-width="1"/><circle cx="2451" cy="1235.6" r="6" stroke="#a0a0a0" stroke-width="1.3"/><path d="M2442 1226.6L2460 1244.6M2460 1226.6L2442 1244.6" stroke="#a0a0a0" stroke-width="1"/><circle cx="2481.3" cy="1307.2" r="6" stroke="#a0a0a0" stroke-width="1.3"/><path d="M2472.3 1298.2L2490.3 1316.2M2490.3 1298.2L2472.3 1316.2" stroke="#a0a0a0" stroke-width="1"/><circle cx="2636" cy="1307.2" r="6" stroke="#a0a0a0" stroke-width="1.3"/><path d="M2627 1298.2L2645 1316.2M2645 1298.2L2627 1316.2" stroke="#a0a0a0" stroke-width="1"/><text transform="translate(297,250) rotate(0) scale(0.61,1)" font-family="Liberation Sans" font-style="normal" font-size="27" fill="#ff1a4a" text-anchor="start">61115/94</text><text transform="translate(488,463) rotate(0) scale(0.8,1)" font-family="Liberation Sans" font-style="normal" font-size="31" fill="#ff5010" text-anchor="start">T</text><text transform="translate(788,154) rotate(0) scale(0.78,1) skewX(-7)" font-family="Liberation Sans" font-style="italic" font-size="33" fill="#ff8a00" text-anchor="start">252</text><text transform="translate(1128.6,292.8) rotate(0) scale(0.78,1) skewX(-7)" font-family="Liberation Sans" font-style="italic" font-size="33" fill="#ff8a00" text-anchor="start">27/2</text><text transform="translate(1463,288) rotate(0) scale(0.78,1) skewX(-7)" font-family="Liberation Sans" font-style="italic" font-size="33" fill="#ff8a00" text-anchor="start">34</text><text transform="translate(1648.6,442.7) rotate(0) scale(0.78,1) skewX(-7)" font-family="Liberation Sans" font-style="italic" font-size="33" fill="#ff8a00" text-anchor="start">33</text><text transform="translate(1803,298) rotate(0) scale(0.645,1) skewX(-7)" font-family="Liberation Sans" font-style="italic" font-size="70" fill="#c080f0" text-anchor="start">Rehberg</text><text transform="translate(968,112) rotate(75) scale(0.78,1) skewX(-7)" font-family="Liberation Sans" font-style="italic" font-size="33" fill="#ff8a00" text-anchor="start">27/3</text><text transform="translate(967,363) rotate(-58) scale(0.78,1) skewX(-7)" font-family="Liberation Sans" font-style="italic" font-size="33" fill="#ff8a00" text-anchor="start">27/5</text><text transform="translate(365,592) rotate(22) scale(0.72,1)" font-family="Liberation Sans" font-style="normal" font-size="31" fill="#ff3c14" text-anchor="start">Kapelle</text><text transform="translate(404,782) rotate(-50) scale(0.78,1) skewX(-7)" font-family="Liberation Sans" font-style="italic" font-size="30" fill="#ff8a00" text-anchor="start">24</text><text transform="translate(410,925.5) rotate(0) scale(0.78,1) skewX(-7)" font-family="Liberation Sans" font-style="italic" font-size="33" fill="#ff8a00" text-anchor="start">23</text><text transform="translate(586,962) rotate(-45) scale(0.78,1) skewX(-7)" font-family="Liberation Sans" font-style="italic" font-size="26" fill="#ff1a4a" text-anchor="start">24</text><text transform="translate(1395,968.5) rotate(0) scale(0.78,1) skewX(-7)" font-family="Liberation Sans" font-style="italic" font-size="33" fill="#ff8a00" text-anchor="start">30</text><text transform="translate(1690,968) rotate(22) scale(0.78,1) skewX(-7)" font-family="Liberation Sans" font-style="italic" font-size="33" fill="#ff8a00" text-anchor="start">51/1</text><text transform="translate(2096.4,760.8) rotate(0) scale(0.78,1) skewX(-7)" font-family="Liberation Sans" font-style="italic" font-size="33" fill="#ff8a00" text-anchor="start">37</text><text transform="translate(2827.6,951.6) rotate(0) scale(0.78,1) skewX(-7)" font-family="Liberation Sans" font-style="italic" font-size="33" fill="#ff8a00" text-anchor="start">47</text><text transform="translate(1995,1115) rotate(22) scale(0.78,1) skewX(-7)" font-family="Liberation Sans" font-style="italic" font-size="33" fill="#ff8a00" text-anchor="start">45/2</text><text transform="translate(1998.4,1031) rotate(0) scale(0.78,1) skewX(-7)" font-family="Liberation Sans" font-style="italic" font-size="26" fill="#ff1a4a" text-anchor="start">14</text><text transform="translate(2322,1140) rotate(40) scale(0.78,1) skewX(-7)" font-family="Liberation Sans" font-style="italic" font-size="26" fill="#ff1a4a" text-anchor="start">zu 10</text><text transform="translate(223.3,1153.8) rotate(0) scale(0.78,1) skewX(-7)" font-family="Liberation Sans" font-style="italic" font-size="33" fill="#ff8a00" text-anchor="start">25/2</text><text transform="translate(659.5,1352.5) rotate(0) scale(0.78,1) skewX(-7)" font-family="Liberation Sans" font-style="italic" font-size="33" fill="#ff8a00" text-anchor="start">55</text><text transform="translate(414,1435) rotate(-80) scale(0.78,1) skewX(-7)" font-family="Liberation Sans" font-style="italic" font-size="33" fill="#f0c000" text-anchor="start">Dorfstr.</text><text transform="translate(455.5,1481) rotate(0) scale(0.72,1) skewX(-7)" font-family="Liberation Sans" font-style="italic" font-size="33" fill="#30c020" text-anchor="start">Parkpl.</text><text transform="translate(413.3,1537) rotate(0) scale(0.78,1) skewX(-7)" font-family="Liberation Sans" font-style="italic" font-size="33" fill="#ff8a00" text-anchor="start">22</text><text transform="translate(188,1570) rotate(0) scale(0.78,1) skewX(-7)" font-family="Liberation Sans" font-style="italic" font-size="33" fill="#ff8a00" text-anchor="start">21</text><text transform="translate(311,1525) rotate(-92) scale(0.65,1)" font-family="Liberation Sans" font-style="normal" font-size="26" fill="#ff1a4a" text-anchor="start">26</text><text transform="translate(1811,1105) rotate(0) scale(0.78,1) skewX(-7)" font-family="Liberation Sans" font-style="italic" font-size="33" fill="#ff8a00" text-anchor="start">36</text><text transform="translate(1623.2,1403.4) rotate(0) scale(0.78,1) skewX(-7)" font-family="Liberation Sans" font-style="italic" font-size="33" fill="#ff8a00" text-anchor="start">31</text><text transform="translate(2494.6,1205) rotate(25) scale(0.78,1) skewX(-7)" font-family="Liberation Sans" font-style="italic" font-size="33" fill="#ff8a00" text-anchor="start">44</text><text transform="translate(2805.6,1261.8) rotate(0) scale(0.78,1) skewX(-7)" font-family="Liberation Sans" font-style="italic" font-size="33" fill="#ff8a00" text-anchor="start">50</text><text transform="translate(2566,1250) rotate(-15) scale(0.78,1) skewX(-7)" font-family="Liberation Sans" font-style="italic" font-size="24" fill="#ff1a4a" text-anchor="start">10</text><text transform="translate(2480.6,1370) rotate(0) scale(0.78,1) skewX(-7)" font-family="Liberation Sans" font-style="italic" font-size="33" fill="#ff8a00" text-anchor="start">46</text><text transform="translate(2683,1362) rotate(-15) scale(0.78,1) skewX(-7)" font-family="Liberation Sans" font-style="italic" font-size="33" fill="#ff8a00" text-anchor="start">48</text><text transform="translate(2340,1405) rotate(20) scale(0.78,1) skewX(-7)" font-family="Liberation Sans" font-style="italic" font-size="33" fill="#ff8a00" text-anchor="start">45/1</text><text transform="translate(2105,1494.2) rotate(0) scale(0.78,1) skewX(-7)" font-family="Liberation Sans" font-style="italic" font-size="33" fill="#ff8a00" text-anchor="start">45</text><text transform="translate(2767,1494.2) rotate(0) scale(0.78,1) skewX(-7)" font-family="Liberation Sans" font-style="italic" font-size="24" fill="#ff1a4a" text-anchor="start">6</text><text transform="translate(1940,1150) rotate(180) scale(0.78,1) skewX(-7)" font-family="Liberation Sans" font-style="italic" font-size="22" fill="#ff1a4a" text-anchor="start">11</text><text transform="translate(1565,934) rotate(200) scale(0.78,1) skewX(-7)" font-family="Liberation Sans" font-style="italic" font-size="22" fill="#ff1a4a" text-anchor="start">zu 15</text></g><path d="M258.5 1465V1420M258.5 1465H300" stroke="#e000e0" stroke-width="2.4" fill="none"/><path d="M253 1432L258.5 1415L264 1432Z M295 1459L312 1465L295 1471Z" fill="#e000e0"/><text transform="translate(253,1412) rotate(0) scale(1,1)" font-family="Liberation Sans" font-style="normal" font-size="18" fill="#c000e0" text-anchor="start">Y</text><text transform="translate(313,1476) rotate(0) scale(1,1)" font-family="Liberation Sans" font-style="normal" font-size="18" fill="#c000e0" text-anchor="start">X</text></svg><svg style="left:170px;top:598px" width="72" height="36"><g stroke="#f0e000" stroke-width="2"><path d="M15 2V30M1 16H29M5 6L25 26M25 6L5 26"/></g><circle cx="15" cy="16" r="7" fill="#f0e000"/><path d="M40 18L62 18L68 24V32H38V24Z" fill="#ddd" stroke="#888" stroke-width="1"/><path d="M46 18L52 4L66 9L60 22Z" fill="#fff" stroke="#999" stroke-width="1"/><rect x="42" y="25" width="22" height="4" fill="#aaa"/></svg><div class="a" style="left:5px;top:60px;width:87px;height:86px;background:#4a4a4c;border:2px solid #3c3c3e;border-radius:5px"></div><div class="a" style="left:102px;top:92px;width:0;height:0;border-top:11px solid transparent;border-bottom:11px solid transparent;border-left:11px solid #333"></div><div class="a" style="left:5px;top:278px;width:87px;height:86px;background:#4a4a4c;border:2px solid #3c3c3e;border-radius:5px"></div><div class="a" style="left:102px;top:310px;width:0;height:0;border-top:11px solid transparent;border-bottom:11px solid transparent;border-left:11px solid #333"></div><div class="a" style="left:5px;top:370px;width:87px;height:86px;background:#4a4a4c;border:2px solid #3c3c3e;border-radius:5px"></div><div class="a" style="left:102px;top:402px;width:0;height:0;border-top:11px solid transparent;border-bottom:11px solid transparent;border-left:11px solid #333"></div><div class="a" style="left:5px;top:462px;width:87px;height:86px;background:#4a4a4c;border:2px solid #3c3c3e;border-radius:5px"></div><div class="a" style="left:102px;top:494px;width:0;height:0;border-top:11px solid transparent;border-bottom:11px solid transparent;border-left:11px solid #333"></div><div class="a" style="left:5px;top:571px;width:87px;height:86px;background:#4a4a4c;border:2px solid #3c3c3e;border-radius:5px"></div><div class="a" style="left:102px;top:603px;width:0;height:0;border-top:11px solid transparent;border-bottom:11px solid transparent;border-left:11px solid #333"></div><div class="a" style="left:5px;top:663px;width:87px;height:86px;background:#4a4a4c;border:2px solid #3c3c3e;border-radius:5px"></div><div class="a" style="left:102px;top:695px;width:0;height:0;border-top:11px solid transparent;border-bottom:11px solid transparent;border-left:11px solid #333"></div><div class="a" style="left:5px;top:755px;width:87px;height:86px;background:#4a4a4c;border:2px solid #3c3c3e;border-radius:5px"></div><div class="a" style="left:102px;top:787px;width:0;height:0;border-top:11px solid transparent;border-bottom:11px solid transparent;border-left:11px solid #333"></div><div class="a" style="left:5px;top:847px;width:87px;height:86px;background:#4a4a4c;border:2px solid #3c3c3e;border-radius:5px"></div><div class="a" style="left:102px;top:879px;width:0;height:0;border-top:11px solid transparent;border-bottom:11px solid transparent;border-left:11px solid #333"></div><div class="a" style="left:5px;top:939px;width:87px;height:86px;background:#4a4a4c;border:2px solid #3c3c3e;border-radius:5px"></div><div class="a" style="left:102px;top:971px;width:0;height:0;border-top:11px solid transparent;border-bottom:11px solid transparent;border-left:11px solid #333"></div><div class="a" style="left:5px;top:1031px;width:87px;height:86px;background:#4a4a4c;border:2px solid #3c3c3e;border-radius:5px"></div><div class="a" style="left:102px;top:1063px;width:0;height:0;border-top:11px solid transparent;border-bottom:11px solid transparent;border-left:11px solid #333"></div><div class="a" style="left:4px;top:152px;width:59px;height:58px;background:#4a4a4c;border:2px solid #3c3c3e;border-radius:5px"></div><div class="a" style="left:67px;top:152px;width:59px;height:58px;background:#a31238;border:2px solid #7c0e2a;border-radius:5px"></div><div class="a" style="left:4px;top:214px;width:59px;height:58px;background:#a31238;border:2px solid #7c0e2a;border-radius:5px"></div><div class="a" style="left:67px;top:214px;width:59px;height:58px;background:#a31238;border:2px solid #7c0e2a;border-radius:5px"></div><div class="a" style="left:4px;top:1140px;width:59px;height:58px;background:#4a4a4c;border:2px solid #3c3c3e;border-radius:5px"></div><div class="a" style="left:67px;top:1140px;width:59px;height:58px;background:#4a4a4c;border:2px solid #3c3c3e;border-radius:5px"></div><div class="a" style="left:4px;top:1203px;width:59px;height:58px;background:#4a4a4c;border:2px solid #3c3c3e;border-radius:5px"></div><div class="a" style="left:67px;top:1203px;width:59px;height:58px;background:#4a4a4c;border:2px solid #3c3c3e;border-radius:5px"></div><div class="a" style="left:4px;top:1266px;width:59px;height:58px;background:#4a4a4c;border:2px solid #3c3c3e;border-radius:5px"></div><div class="a" style="left:67px;top:1266px;width:59px;height:58px;background:#4a4a4c;border:2px solid #3c3c3e;border-radius:5px"></div><div class="a" style="left:4px;top:1329px;width:59px;height:58px;background:#4a4a4c;border:2px solid #3c3c3e;border-radius:5px"></div><div class="a" style="left:67px;top:1329px;width:59px;height:58px;background:#4a4a4c;border:2px solid #3c3c3e;border-radius:5px"></div><div class="a" style="left:4px;top:1392px;width:59px;height:58px;background:#4a4a4c;border:2px solid #3c3c3e;border-radius:5px"></div><div class="a" style="left:67px;top:1392px;width:59px;height:58px;background:#4a4a4c;border:2px solid #3c3c3e;border-radius:5px"></div><svg style="left:0;top:0" width="140" height="1610"><line x1="15" y1="127" x2="84" y2="85" stroke="#1a78c8" stroke-width="3"/><rect x="12.0" y="124.0" width="6" height="6" fill="#fff" stroke="#1a6ec0" stroke-width="2"/><rect x="81.0" y="82.0" width="6" height="6" fill="#fff" stroke="#1a6ec0" stroke-width="2"/><circle cx="33" cy="180" r="21" fill="none" stroke="#8c8c8c" stroke-width="2"/><rect x="29.0" y="176.0" width="8" height="8" fill="#fff" stroke="#1a6ec0" stroke-width="2"/><path d="M83.5 184.7L108.6 165.7M83.5 184.7L97.5 202.6" stroke="#8c8c8c" stroke-width="2.2"/><rect x="79.0" y="180.2" width="9" height="9" fill="#fff" stroke="#1a6ec0" stroke-width="2"/><rect x="104.1" y="161.2" width="9" height="9" fill="#fff" stroke="#1a6ec0" stroke-width="2"/><path d="M12.4 222L54.2 264M54.2 222L12.4 264" stroke="#8c8c8c" stroke-width="2.2"/><rect x="28.5" y="238.5" width="9" height="9" fill="#fff" stroke="#1a6ec0" stroke-width="2"/><circle cx="85" cy="233" r="9" fill="none" stroke="#8c8c8c" stroke-width="1.5"/><rect x="82.5" y="221.5" width="5" height="5" fill="#fff" stroke="#1a6ec0" stroke-width="2"/><rect x="82.5" y="239.5" width="5" height="5" fill="#fff" stroke="#1a6ec0" stroke-width="2"/><rect x="73.5" y="230.5" width="5" height="5" fill="#fff" stroke="#1a6ec0" stroke-width="2"/><rect x="91.5" y="230.5" width="5" height="5" fill="#fff" stroke="#1a6ec0" stroke-width="2"/><path d="M98 225H116M98 239H118M104 225C110 225 106 239 112 239" stroke="#8c8c8c" stroke-width="1.3" fill="none"/><rect x="113.5" y="222.5" width="5" height="5" fill="#fff" stroke="#1a6ec0" stroke-width="2"/><rect x="98.5" y="236.5" width="5" height="5" fill="#fff" stroke="#1a6ec0" stroke-width="2"/><path d="M74 259L96 251M98 262L116 247V262Z" stroke="#8c8c8c" stroke-width="1.3" fill="none" stroke-dasharray="3,2"/><rect x="80.5" y="253.5" width="5" height="5" fill="#fff" stroke="#1a6ec0" stroke-width="2"/><rect x="113.5" y="244.5" width="5" height="5" fill="#fff" stroke="#1a6ec0" stroke-width="2"/><g><path d="M48.5 282V359M9 320.5H86" stroke="#fff" stroke-width="6"/><path d="M48.5 282V359M9 320.5H86" stroke="#9a9aff" stroke-width="2.5"/><path d="M38 297H59M38 344H59M25 310V331M71 310V331" stroke="#fff" stroke-width="6"/><path d="M38 297H59M38 344H59M25 310V331M71 310V331" stroke="#0000b0" stroke-width="3"/></g><path d="M11 388C11 370 84 370 84 388L56 420V446C56 452 41 452 41 446V420Z" fill="#2e9e72" stroke="#fff" stroke-width="2.2"/><ellipse cx="47.5" cy="388" rx="33" ry="10" fill="#48b88a" stroke="#1a6e4c" stroke-width="1"/><path d="M60 380C70 382 74 386 72 392" stroke="#c8f0e0" stroke-width="3" fill="none" opacity=".7"/><path d="M21 469L58 469L75 517L42 528Z" fill="#e8e8e8" stroke="#9a9a9a" stroke-width="1.5"/><path d="M27 474L55 474L69 513L44 521Z" fill="#7a70f4"/><path d="M32 505L44 522L45 535L31 535Z" fill="#d8d8d8" stroke="#999" stroke-width="1"/><ellipse cx="38.7" cy="537" rx="18" ry="6" fill="#d0d0d0" stroke="#999" stroke-width="1"/><path d="M11 625L37.6 612L83.4 626L56 640Z" fill="#e0007a" stroke="#888" stroke-width="1.2"/><path d="M11 617L37.6 604L83.4 618L56 632Z" fill="#ec6eac" stroke="#888" stroke-width="1.2"/><path d="M11 609L37.6 596L83.4 610L56 624Z" fill="#f4b0d4" stroke="#888" stroke-width="1.2"/><path d="M11 601L37.6 588L83.4 602L56 616Z" fill="#f8eef2" stroke="#888" stroke-width="1.2"/><rect x="10" y="673" width="19" height="8" fill="#000"/><path d="M10 690L29 710M29 690L10 710" stroke="#ddd" stroke-width="1"/><path d="M52 701L80 672L85 677L57 706L49 709Z" fill="#4caf3c" stroke="#2a7020" stroke-width="1"/><path d="M49 709L52 701L57 706Z" fill="#d8b080"/><rect x="10" y="741" width="77" height="4" fill="#000"/><text x="35" y="734" font-family="Liberation Sans" font-size="20" fill="#b8c8e0">0,0</text><text x="15" y="778" font-family="Liberation Sans" font-size="15" fill="#111" textLength="27">[xxx]</text><text x="18" y="793" font-family="Liberation Sans" font-size="15" fill="#111">X:X</text><rect x="57" y="765" width="23" height="30" fill="#c8c8c8" stroke="#999"/><path d="M51 780L66 762L84 776L68 797Z" fill="#faf0f2" stroke="#e0306a" stroke-width="1.5"/><circle cx="29" cy="816.5" r="9" fill="#fff" stroke="#d00" stroke-width="2.2"/><path d="M29 807.5A9 9 0 0 1 38 816.5H29ZM29 825.5A9 9 0 0 1 20 816.5H29Z" fill="#000"/><path d="M11 816.5H47M29 798V835" stroke="#d00" stroke-width="2"/><rect x="56.0" y="805.0" width="4" height="4" fill="#000"/><rect x="56.0" y="812.7" width="4" height="4" fill="#000"/><rect x="56.0" y="820.4" width="4" height="4" fill="#000"/><rect x="56.0" y="828.1" width="4" height="4" fill="#000"/><rect x="63.7" y="805.0" width="4" height="4" fill="#000"/><rect x="63.7" y="812.7" width="4" height="4" fill="#000"/><rect x="63.7" y="820.4" width="4" height="4" fill="#000"/><rect x="63.7" y="828.1" width="4" height="4" fill="#000"/><rect x="71.4" y="805.0" width="4" height="4" fill="#000"/><rect x="71.4" y="812.7" width="4" height="4" fill="#000"/><rect x="71.4" y="820.4" width="4" height="4" fill="#000"/><rect x="71.4" y="828.1" width="4" height="4" fill="#000"/><rect x="79.1" y="805.0" width="4" height="4" fill="#000"/><rect x="79.1" y="812.7" width="4" height="4" fill="#000"/><rect x="79.1" y="820.4" width="4" height="4" fill="#000"/><rect x="79.1" y="828.1" width="4" height="4" fill="#000"/><clipPath id="hc"><rect x="10" y="852" width="75" height="76"/></clipPath><path clip-path="url(#hc)" d="M-60.0 928L15.0 852M-46.3 928L28.7 852M-32.6 928L42.4 852M-18.900000000000006 928L56.099999999999994 852M-5.200000000000003 928L69.8 852M8.5 928L83.5 852M22.19999999999999 928L97.19999999999999 852M35.89999999999999 928L110.89999999999999 852M49.599999999999994 928L124.6 852M63.3 928L138.3 852M77.0 928L152.0 852M90.69999999999999 928L165.7 852" stroke="#1a80c8" stroke-width="2.5"/><path d="M18 945H66L78 957V1018H18Z" fill="#fff5f7" stroke="#d0104a" stroke-width="2"/><path d="M66 945V957H78" fill="#ddd" stroke="#aaa"/><rect x="18" y="945" width="11" height="9" fill="#d0104a"/><text x="48" y="972" text-anchor="middle" font-family="Liberation Sans" font-size="19" fill="#111">1</text><text x="48" y="1005" text-anchor="middle" font-family="Liberation Sans" font-size="19" fill="#111">(1)</text><polygon points="76.8,1066.4 84.2,1067.2 84.2,1079.8 76.8,1080.6 73.3,1089.1 77.9,1094.9 69.1,1103.7 63.3,1099.1 54.8,1102.6 54.0,1110.0 41.4,1110.0 40.6,1102.6 32.1,1099.1 26.3,1103.7 17.5,1094.9 22.1,1089.1 18.6,1080.6 11.2,1079.8 11.2,1067.2 18.6,1066.4 22.1,1057.9 17.5,1052.1 26.3,1043.3 32.1,1047.9 40.6,1044.4 41.4,1037.0 54.0,1037.0 54.8,1044.4 63.3,1047.9 69.1,1043.3 77.9,1052.1 73.3,1057.9" fill="#4a4a4c" stroke="#ddd" stroke-width="1.5"/><circle cx="47.7" cy="1073.5" r="20" fill="#505052" stroke="#ddd" stroke-width="1.5"/><path d="M39 1060L61 1073.5L39 1087Z" fill="#1a6ec0" stroke="#fff" stroke-width="2"/><rect x="10" y="1154" width="20" height="15" fill="#ddd" stroke="#888"/><rect x="16" y="1147" width="20" height="15" fill="#f0f4fa" stroke="#1a6ec0" stroke-width="2"/><rect x="34" y="1169" width="20" height="15" fill="#f0f4fa" stroke="#1a6ec0" stroke-width="2"/><rect x="28" y="1175" width="20" height="15" fill="#ddd" stroke="#888"/><path d="M14 1173Q16 1181 24 1182" stroke="#000" stroke-width="2" fill="none"/><rect x="79" y="1147" width="20" height="15" fill="#f0f4fa" stroke="#1a6ec0" stroke-width="2"/><rect x="73" y="1154" width="20" height="15" fill="#ddd" stroke="#888"/><rect x="91" y="1175" width="20" height="15" fill="#ddd" stroke="#888"/><rect x="97" y="1169" width="20" height="15" fill="#f0f4fa" stroke="#1a6ec0" stroke-width="2"/><path d="M77 1173Q79 1181 87 1182" stroke="#000" stroke-width="2" fill="none"/><clipPath id="hb"><rect x="10" y="1209" width="45" height="44"/></clipPath><path clip-path="url(#hb)" d="M-40 1253L5 1209M-35 1253L10 1209M-30 1253L15 1209M-25 1253L20 1209M-20 1253L25 1209M-15 1253L30 1209M-10 1253L35 1209M-5 1253L40 1209M0 1253L45 1209M5 1253L50 1209M10 1253L55 1209M15 1253L60 1209M20 1253L65 1209M25 1253L70 1209M30 1253L75 1209M35 1253L80 1209M40 1253L85 1209M45 1253L90 1209M50 1253L95 1209M55 1253L100 1209" stroke="#1a70c0" stroke-width="2.2"/><rect x="16" y="1215" width="33" height="24" fill="#4a4a4c" stroke="#f0c800" stroke-width="2"/><path d="M28 1250L52 1236M32 1236L52 1250" stroke="#c01020" stroke-width="2"/><circle cx="54" cy="1234" r="3" fill="none" stroke="#c01020" stroke-width="1.5"/><circle cx="54" cy="1251" r="3" fill="none" stroke="#c01020" stroke-width="1.5"/><rect x="79" y="1215" width="33" height="24" fill="none" stroke="#f0c800" stroke-width="2"/><path d="M76 1211L116 1250M116 1211L76 1250" stroke="#ff1a60" stroke-width="5" stroke-linecap="round"/><rect x="11" y="1272" width="19" height="15" fill="#1a5a90" stroke="#f0c800" stroke-width="1.5"/><path d="M31 1302L47 1282L56 1302Z" fill="#1a5a90" stroke="#f0c800" stroke-width="1.8"/><text x="47" y="1286" font-family="Liberation Sans" font-weight="bold" font-size="8" fill="#000">ID</text><path d="M18 1294Q20 1300 26 1301" stroke="#000" stroke-width="2" fill="none"/><path d="M36 1300L55 1292M20 1283L35 1290" stroke="#c01020" stroke-width="1.5"/><rect x="78" y="1283" width="33" height="20" fill="none" stroke="#f0c800" stroke-width="2"/><text x="98" y="1280" font-family="Liberation Sans" font-weight="bold" font-size="8" fill="#000">Edit</text><path d="M91 1305L116 1290M96 1291L116 1307" stroke="#c01020" stroke-width="2"/><circle cx="117" cy="1288" r="3" fill="none" stroke="#c01020" stroke-width="1.5"/><circle cx="117" cy="1308" r="3" fill="none" stroke="#c01020" stroke-width="1.5"/><rect x="4" y="1481" width="123" height="123" fill="#000"/><path d="M65.5 1483V1537M65.5 1549V1603M6 1542.5H59M72 1542.5H126" stroke="#e8e000" stroke-width="1.5"/></svg><div class="a" style="left:1197px;top:1469px;width:592px;height:88px;background:#4a4a4c;border:1px dashed #e0e0e0"></div><div class="a" style="left:1201px;top:1473px;width:80px;height:80px;background:#4a4a4c;border:2px solid #3c3c3e;border-radius:5px"></div><div class="a" style="left:1285px;top:1473px;width:80px;height:80px;background:#4a4a4c;border:2px solid #3c3c3e;border-radius:5px"></div><div class="a" style="left:1370px;top:1473px;width:80px;height:80px;background:#4a4a4c;border:2px solid #3c3c3e;border-radius:5px"></div><div class="a" style="left:1453px;top:1473px;width:80px;height:80px;background:#a31238;border:2px solid #7c0e2a;border-radius:5px"></div><div class="a" style="left:1537px;top:1473px;width:80px;height:80px;background:#a31238;border:2px solid #7c0e2a;border-radius:5px"></div><div class="a" style="left:1621px;top:1473px;width:80px;height:80px;background:#a31238;border:2px solid #7c0e2a;border-radius:5px"></div><div class="a" style="left:1706px;top:1473px;width:80px;height:80px;background:#4a4a4c;border:2px solid #3c3c3e;border-radius:5px"></div><svg style="left:0;top:0" width="2860" height="1610"><path d="M1213.0 1481.0V1489.0M1209.0 1485.0H1217.0" stroke="#000" stroke-width="1.8"/><path d="M1213.0 1494.8V1502.8M1209.0 1498.8H1217.0" stroke="#000" stroke-width="1.8"/><path d="M1213.0 1508.6V1516.6M1209.0 1512.6H1217.0" stroke="#000" stroke-width="1.8"/><path d="M1213.0 1522.4V1530.4M1209.0 1526.4H1217.0" stroke="#000" stroke-width="1.8"/><path d="M1213.0 1536.2V1544.2M1209.0 1540.2H1217.0" stroke="#000" stroke-width="1.8"/><path d="M1226.8 1481.0V1489.0M1222.8 1485.0H1230.8" stroke="#000" stroke-width="1.8"/><path d="M1226.8 1494.8V1502.8M1222.8 1498.8H1230.8" stroke="#000" stroke-width="1.8"/><path d="M1226.8 1508.6V1516.6M1222.8 1512.6H1230.8" stroke="#000" stroke-width="1.8"/><path d="M1226.8 1522.4V1530.4M1222.8 1526.4H1230.8" stroke="#000" stroke-width="1.8"/><path d="M1226.8 1536.2V1544.2M1222.8 1540.2H1230.8" stroke="#000" stroke-width="1.8"/><path d="M1240.6 1481.0V1489.0M1236.6 1485.0H1244.6" stroke="#000" stroke-width="1.8"/><path d="M1240.6 1494.8V1502.8M1236.6 1498.8H1244.6" stroke="#000" stroke-width="1.8"/><path d="M1240.6 1508.6V1516.6M1236.6 1512.6H1244.6" stroke="#000" stroke-width="1.8"/><path d="M1240.6 1522.4V1530.4M1236.6 1526.4H1244.6" stroke="#000" stroke-width="1.8"/><path d="M1240.6 1536.2V1544.2M1236.6 1540.2H1244.6" stroke="#000" stroke-width="1.8"/><path d="M1254.4 1481.0V1489.0M1250.4 1485.0H1258.4" stroke="#000" stroke-width="1.8"/><path d="M1254.4 1494.8V1502.8M1250.4 1498.8H1258.4" stroke="#000" stroke-width="1.8"/><path d="M1254.4 1508.6V1516.6M1250.4 1512.6H1258.4" stroke="#000" stroke-width="1.8"/><path d="M1254.4 1522.4V1530.4M1250.4 1526.4H1258.4" stroke="#000" stroke-width="1.8"/><path d="M1254.4 1536.2V1544.2M1250.4 1540.2H1258.4" stroke="#000" stroke-width="1.8"/><path d="M1268.2 1481.0V1489.0M1264.2 1485.0H1272.2" stroke="#000" stroke-width="1.8"/><path d="M1268.2 1494.8V1502.8M1264.2 1498.8H1272.2" stroke="#000" stroke-width="1.8"/><path d="M1268.2 1508.6V1516.6M1264.2 1512.6H1272.2" stroke="#000" stroke-width="1.8"/><path d="M1268.2 1522.4V1530.4M1264.2 1526.4H1272.2" stroke="#000" stroke-width="1.8"/><path d="M1268.2 1536.2V1544.2M1264.2 1540.2H1272.2" stroke="#000" stroke-width="1.8"/><path d="M1324.5 1478V1547M1290 1512.5H1359" stroke="#fff" stroke-width="6"/><path d="M1324.5 1478V1547M1290 1512.5H1359" stroke="#9a9aff" stroke-width="2.5"/><path d="M1315 1491H1334M1315 1533H1334M1303 1503V1522M1346 1503V1522" stroke="#fff" stroke-width="6"/><path d="M1315 1491H1334M1315 1533H1334M1303 1503V1522M1346 1503V1522" stroke="#0000b0" stroke-width="3"/><circle cx="1409" cy="1512.5" r="31" fill="none" stroke="#8c8c8c" stroke-width="2"/><rect x="1405.0" y="1508.0" width="8" height="8" fill="#fff" stroke="#1a6ec0" stroke-width="2"/><path d="M1473.5 1519L1511 1491M1473.5 1519L1494 1547" stroke="#8c8c8c" stroke-width="2.2"/><rect x="1469.0" y="1514.5" width="9" height="9" fill="#fff" stroke="#1a6ec0" stroke-width="2"/><rect x="1506.5" y="1486.5" width="9" height="9" fill="#fff" stroke="#1a6ec0" stroke-width="2"/><path d="M1545 1481L1608 1544M1608 1481L1545 1544" stroke="#8c8c8c" stroke-width="2.2"/><rect x="1572.0" y="1508.0" width="9" height="9" fill="#fff" stroke="#1a6ec0" stroke-width="2"/><circle cx="1644" cy="1497" r="12" fill="none" stroke="#8c8c8c" stroke-width="1.5"/><rect x="1641.0" y="1481.0" width="6" height="6" fill="#fff" stroke="#1a6ec0" stroke-width="2"/><rect x="1641.0" y="1507.0" width="6" height="6" fill="#fff" stroke="#1a6ec0" stroke-width="2"/><rect x="1628.0" y="1494.0" width="6" height="6" fill="#fff" stroke="#1a6ec0" stroke-width="2"/><rect x="1654.0" y="1494.0" width="6" height="6" fill="#fff" stroke="#1a6ec0" stroke-width="2"/><path d="M1664 1486H1690M1667 1506H1694M1674 1486C1684 1486 1678 1506 1688 1506" stroke="#8c8c8c" stroke-width="1.4" fill="none"/><rect x="1687.0" y="1483.0" width="6" height="6" fill="#fff" stroke="#1a6ec0" stroke-width="2"/><rect x="1664.0" y="1503.0" width="6" height="6" fill="#fff" stroke="#1a6ec0" stroke-width="2"/><path d="M1627 1536L1660 1525M1664 1541L1690 1518V1541Z" stroke="#8c8c8c" stroke-width="1.4" fill="none" stroke-dasharray="4,2"/><rect x="1638.0" y="1528.0" width="6" height="6" fill="#fff" stroke="#1a6ec0" stroke-width="2"/><rect x="1687.0" y="1515.0" width="6" height="6" fill="#fff" stroke="#1a6ec0" stroke-width="2"/><text x="1710" y="1525" font-family="Liberation Sans" font-size="24" fill="#000" stroke="#fff" stroke-width="2.5" paint-order="stroke">x:</text><rect x="1730" y="1490" width="49" height="45" fill="#fff" stroke="#333" stroke-width="1.5"/><text x="1734" y="1524" font-family="Liberation Sans" font-size="32" fill="#8a8a8a" textLength="33">25</text><path d="M1771 1494V1531M1766 1494H1776M1766 1531H1776" stroke="#1a6ec0" stroke-width="2.2"/></svg><div class="a" style="left:1995px;top:107px;width:857px;height:610px;background:#000;border:2px solid #3c3c3c;border-radius:10px;overflow:hidden"><div class="a" style="left:0;top:0;width:100%;height:48px;background:#f2f2f2"></div></div><svg style="left:2005px;top:114px" width="34" height="34"><path d="M4.3 16L22.2 6.5V25.5Z" fill="#c4f6f8"/><path d="M22.2 6.5C25 11 25 21 22.2 25.5" stroke="#111" stroke-width="2" fill="none"/><path d="M21.6 8C23.5 12 23.5 20 21.6 24" stroke="#10b030" stroke-width="1.3" fill="none"/><path d="M28.2 4.2L4.3 16L28.2 27.7" stroke="#1a1a1a" stroke-width="2.2" fill="none" stroke-linecap="round" stroke-linejoin="round"/></svg><div class="a" style="left:2042px;top:119px;font-size:20.5px;color:#8a8a8a;line-height:26px">Overview</div><svg style="left:2814px;top:124px" width="17" height="17"><path d="M1 1L16 16M16 1L1 16" stroke="#8a8a8a" stroke-width="1.6"/></svg><svg style="left:0;top:0" width="2860" height="1610"><defs><clipPath id="ov"><path d="M1997 155H2850V705A10 10 0 0 1 2840 715H2007A10 10 0 0 1 1997 705Z"/></clipPath></defs><g clip-path="url(#ov)" fill="none" stroke-width="1.3"><polyline stroke="#f00010" points="1995.0,184.0 2051.0,195.0 2091.0,214.0 2175.0,265.0 2213.0,277.0 2225.0,286.0 2232.0,299.0 2259.0,312.0 2299.0,312.0 2335.0,303.0 2425.0,342.0"/><polyline stroke="#f00010" points="1995.0,184.0 2037.0,214.0 2055.0,232.0 2059.0,242.0 1995.0,344.0"/><polyline stroke="#f00010" points="2059.0,242.0 2113.0,277.0 2139.0,288.0 2169.0,306.0 2205.0,310.0 2235.0,322.0 2273.0,325.0 2301.0,312.0 2365.0,326.0 2425.0,350.0"/><polyline stroke="#f00010" points="2067.0,202.0 2109.0,157.0"/><polyline stroke="#f00010" points="2112.0,225.0 2175.0,157.0"/><polyline stroke="#f00010" points="2175.0,265.0 2236.0,176.0 2217.0,157.0"/><polyline stroke="#f00010" points="2156.0,157.0 2167.0,166.0"/><polyline stroke="#f00010" points="2283.0,157.0 2289.0,166.0 2309.0,228.0 2315.0,236.0 2323.0,264.0 2317.0,288.0 2335.0,303.0"/><polyline stroke="#f00010" points="2296.0,157.0 2315.0,220.0 2322.0,262.0"/><polyline stroke="#f00010" points="2309.0,228.0 2295.0,240.0 2289.0,254.0 2275.0,280.0 2283.0,294.0 2295.0,299.0"/><polyline stroke="#f00010" points="2323.0,264.0 2425.0,178.0"/><polyline stroke="#f00010" points="2379.0,270.0 2425.0,224.0"/><polyline stroke="#f00010" points="2113.0,277.0 2065.0,348.0 2043.0,384.0 2013.0,438.0"/><polyline stroke="#f00010" points="2169.0,275.0 2151.0,308.0 2171.0,322.0 2135.0,362.0 2107.0,404.0 2091.0,438.0"/><polyline stroke="#f00010" points="2205.0,312.0 2179.0,331.0 2169.0,346.0 2135.0,386.0 2119.0,410.0"/><polyline stroke="#f00010" points="2065.0,348.0 2125.0,376.0"/><polyline stroke="#f00010" points="2043.0,383.0 2093.0,403.0"/><polyline stroke="#f00010" points="2273.0,325.0 2291.0,336.0 2289.0,352.0 2277.0,370.0 2261.0,380.0 2235.0,360.0 2253.0,342.0"/><polyline stroke="#f00010" points="2301.0,312.0 2291.0,342.0 2289.0,352.0"/><polyline stroke="#f00010" points="2205.0,402.0 2255.0,438.0"/><polyline stroke="#f00010" points="2339.0,360.0 2359.0,380.0 2343.0,394.0 2347.0,406.0 2325.0,438.0"/><polyline stroke="#f00010" points="2189.0,438.0 2187.0,416.0 2205.0,400.0 2237.0,360.0"/><polyline stroke="#f00010" points="2023.0,174.0 2037.0,157.0"/><polyline stroke="#f00010" points="1995.0,157.0 2023.0,174.0 2055.0,234.0"/><polyline stroke="#00e600" points="2234.0,217.0 2261.0,203.0 2290.0,256.0 2277.0,262.0 2269.0,242.0 2255.0,248.0 2242.0,230.0 2234.0,217.0"/><polyline stroke="#00e600" points="2242.0,230.0 2231.0,248.0 2233.0,252.0 2225.0,262.0 2235.0,270.0 2255.0,248.0 2242.0,230.0"/><polyline stroke="#00e600" points="2319.0,229.0 2333.0,240.0 2336.0,252.0 2329.0,254.0 2319.0,229.0"/><polyline stroke="#00e600" points="2318.0,288.0 2347.0,255.0 2355.0,250.0 2362.0,256.0 2349.0,270.0 2364.0,270.0 2349.0,286.0 2335.0,300.0 2318.0,288.0"/><polyline stroke="#00e600" points="2359.0,295.0 2377.0,272.0 2385.0,275.0 2409.0,286.0 2391.0,319.0 2366.0,302.0 2359.0,295.0"/><polyline stroke="#00e600" points="2297.0,354.0 2305.0,348.0 2315.0,356.0 2311.0,366.0 2297.0,354.0"/><polyline stroke="#00e600" points="2345.0,402.0 2363.0,380.0 2399.0,392.0 2413.0,380.0 2425.0,382.0 2345.0,402.0"/><polyline stroke="#00e600" points="2295.0,422.0 2313.0,410.0 2323.0,402.0 2331.0,410.0 2313.0,434.0 2295.0,422.0"/><polyline stroke="#00e600" points="2143.0,378.0 2153.0,368.0 2165.0,382.0 2159.0,393.0 2143.0,378.0"/><polyline stroke="#00e600" points="2027.0,417.0 2035.0,400.0 2045.0,404.0 2035.0,421.0 2027.0,417.0"/><polyline stroke="#00e600" points="2053.0,370.0 2059.0,360.0 2066.0,364.0 2060.0,374.0 2053.0,370.0"/><polyline stroke="#00e600" points="2101.0,390.0 2107.0,376.0 2120.0,382.0 2115.0,396.0 2101.0,390.0"/><polyline stroke="#00e600" points="2104.0,368.0 2109.0,362.0 2125.0,373.0 2121.0,379.0 2104.0,368.0"/><polyline stroke="#00e600" points="2205.0,332.0 2215.0,318.0 2225.0,326.0 2217.0,340.0 2205.0,332.0"/><polyline stroke="#00e600" points="2145.0,300.0 2149.0,295.0 2156.0,300.0 2151.0,306.0 2145.0,300.0"/><polyline stroke="#00e600" points="2133.0,320.0 2142.0,308.0 2152.0,317.0 2143.0,328.0 2133.0,320.0"/><polyline stroke="#00e600" points="2255.0,358.0 2275.0,344.0 2287.0,358.0 2277.0,370.0 2255.0,358.0"/><polyline stroke="#00e600" points="2235.0,370.0 2241.0,363.0 2246.0,368.0 2243.0,378.0 2235.0,370.0"/><polyline stroke="#00e600" points="2161.0,425.0 2171.0,407.0 2175.0,409.0 2165.0,427.0 2161.0,425.0"/><polyline stroke="#00e600" points="2137.0,426.0 2147.0,416.0 2157.0,420.0 2153.0,434.0 2137.0,426.0"/><polyline stroke="#00e600" points="2401.0,324.0 2407.0,322.0 2425.0,330.0 2425.0,342.0 2401.0,333.0 2401.0,324.0"/><polyline stroke="#00e600" points="2188.0,268.0 2191.0,261.0 2197.0,264.0 2194.0,270.0 2188.0,268.0"/><polyline stroke="#e6e600" points="2091.0,192.0 2107.0,176.0 2124.0,191.0 2108.0,208.0 2091.0,192.0"/><polyline stroke="#e6e600" points="2147.0,210.0 2162.0,194.0 2180.0,208.0 2165.0,225.0 2147.0,210.0"/><polyline stroke="#e6e600" points="2277.0,284.0 2304.0,249.0 2311.0,252.0 2321.0,261.0 2296.0,296.0 2277.0,284.0"/><polyline stroke="#e6e600" points="2232.0,299.0 2240.0,278.0 2269.0,288.0 2259.0,311.0 2232.0,299.0"/><polyline stroke="#e6e600" points="2160.0,307.0 2168.0,297.0 2180.0,304.0 2171.0,315.0 2160.0,307.0"/><polyline stroke="#e6e600" points="2093.0,339.0 2115.0,313.0 2123.0,311.0 2133.0,319.0 2129.0,324.0 2136.0,331.0 2116.0,354.0 2093.0,339.0"/><polyline stroke="#e6e600" points="2167.0,386.0 2201.0,336.0 2207.0,334.0 2229.0,350.0 2207.0,376.0 2183.0,400.0 2167.0,386.0"/><polyline stroke="#e6e600" points="2062.0,384.0 2070.0,363.0 2089.0,369.0 2081.0,390.0 2062.0,384.0"/><polyline stroke="#e6e600" points="2255.0,347.0 2273.0,326.0 2284.0,335.0 2265.0,356.0 2255.0,347.0"/><polyline stroke="#e6e600" points="2295.0,339.0 2302.0,313.0 2323.0,320.0 2317.0,347.0 2295.0,339.0"/><polyline stroke="#e6e600" points="2339.0,360.0 2361.0,337.0 2383.0,356.0 2363.0,378.0 2339.0,360.0"/><polyline stroke="#e6e600" points="2366.0,302.0 2385.0,275.0 2409.0,286.0 2391.0,319.0 2366.0,302.0"/><polyline stroke="#e6e600" points="2106.0,438.0 2117.0,402.0 2139.0,411.0 2127.0,438.0"/><polyline stroke="#e6e600" points="2041.0,438.0 2049.0,421.0 2063.0,404.0 2083.0,416.0 2075.0,438.0"/><polyline stroke="#e6e600" points="2399.0,364.0 2407.0,348.0 2425.0,356.0"/><polyline stroke="#f00010" points="2496.0,157.0 2625.0,187.0 2558.0,271.0 2516.0,328.0 2488.0,370.0"/><polyline stroke="#f00010" points="2558.0,271.0 2597.0,297.0 2564.0,330.0 2516.0,328.0"/><polyline stroke="#f00010" points="2738.0,157.0 2710.0,185.0 2597.0,297.0"/><polyline stroke="#f00010" points="2710.0,185.0 2757.0,235.0 2713.0,275.0 2640.0,341.0 2616.0,343.0 2606.0,349.0 2560.0,402.0"/><polyline stroke="#f00010" points="2713.0,275.0 2768.0,320.0 2808.0,349.0 2846.0,383.0 2846.0,408.0 2818.0,438.0"/><polyline stroke="#f00010" points="2851.0,241.0 2768.0,320.0 2710.0,383.0 2670.0,434.0"/><polyline stroke="#f00010" points="2851.0,308.0 2808.0,349.0"/><polyline stroke="#f00010" points="2710.0,383.0 2736.0,410.0"/><polyline stroke="#f00010" points="2420.0,228.0 2490.0,157.0"/><polyline stroke="#f00010" points="2420.0,180.0 2442.0,157.0"/><polyline stroke="#f00010" points="2420.0,356.0 2488.0,370.0 2560.0,402.0 2652.0,438.0"/><polyline stroke="#f00010" points="2420.0,370.0 2470.0,378.0 2620.0,434.0"/><polyline stroke="#f00010" points="2490.0,389.0 2536.0,408.0 2612.0,424.0 2650.0,438.0"/><polyline stroke="#f00010" points="2470.0,378.0 2470.0,416.0 2464.0,426.0 2480.0,438.0"/><polyline stroke="#f00010" points="2490.0,389.0 2464.0,426.0"/><polyline stroke="#00e600" points="2468.0,271.0 2475.0,260.0 2485.0,266.0 2484.0,270.0 2527.0,299.0 2510.0,321.0 2496.0,313.0 2495.0,310.0 2470.0,292.0 2468.0,283.0 2468.0,271.0"/><polyline stroke="#00e600" points="2491.0,324.0 2500.0,311.0 2511.0,317.0 2502.0,331.0 2491.0,324.0"/><polyline stroke="#00e600" points="2544.0,305.0 2563.0,278.0 2592.0,298.0 2580.0,310.0 2574.0,306.0 2565.0,320.0 2544.0,305.0"/><polyline stroke="#00e600" points="2572.0,328.0 2584.0,318.0 2600.0,334.0 2591.0,345.0 2572.0,328.0"/><polyline stroke="#00e600" points="2626.0,327.0 2638.0,316.0 2650.0,330.0 2639.0,340.0 2626.0,327.0"/><polyline stroke="#00e600" points="2685.0,324.0 2696.0,311.0 2716.0,326.0 2705.0,339.0 2685.0,324.0"/><polyline stroke="#00e600" points="2745.0,256.0 2764.0,238.0 2792.0,269.0 2773.0,287.0 2745.0,256.0"/><polyline stroke="#00e600" points="2596.0,382.0 2613.0,365.0 2614.0,367.0 2640.0,341.0 2654.0,333.0 2676.0,355.0 2664.0,366.0 2668.0,371.0 2682.0,389.0 2666.0,414.0 2640.0,400.0 2626.0,378.0 2611.0,395.0 2596.0,382.0"/><polyline stroke="#00e600" points="2551.0,383.0 2562.0,373.0 2571.0,383.0 2564.0,393.0 2551.0,383.0"/><polyline stroke="#00e600" points="2529.0,422.0 2540.0,408.0 2549.0,414.0 2545.0,428.0 2529.0,422.0"/><polyline stroke="#00e600" points="2420.0,384.0 2432.0,370.0 2463.0,389.0 2439.0,434.0 2420.0,424.0 2420.0,384.0"/><polyline stroke="#00e600" points="2420.0,280.0 2430.0,286.0 2437.0,276.0 2457.0,288.0 2454.0,298.0 2473.0,307.0 2469.0,316.0 2481.0,324.0 2464.0,359.0 2450.0,352.0 2440.0,326.0 2420.0,320.0 2420.0,280.0"/><polyline stroke="#00e600" points="2715.0,419.0 2726.0,410.0 2736.0,410.0 2743.0,403.0 2758.0,417.0 2748.0,430.0 2715.0,419.0"/><polyline stroke="#00e600" points="2432.0,216.0 2545.0,287.0"/><polyline stroke="#e6e600" points="2503.0,371.0 2512.0,362.0 2531.0,339.0 2553.0,353.0 2530.0,389.0 2503.0,371.0"/><polyline stroke="#e6e600" points="2581.0,401.0 2586.0,393.0 2589.0,388.0 2597.0,383.0 2611.0,395.0 2596.0,413.0 2581.0,401.0"/><polyline stroke="#e6e600" points="2476.0,412.0 2491.0,393.0 2513.0,410.0 2498.0,428.0 2476.0,412.0"/><polyline stroke="#e6e600" points="2628.0,420.0 2640.0,400.0 2666.0,416.0 2652.0,438.0"/><polyline stroke="#e6e600" points="2730.0,423.0 2738.0,416.0 2750.0,425.0 2764.0,412.0 2788.0,434.0"/><polyline stroke="#f00010" points="2172.0,430.0 2166.0,464.0 2159.0,556.0 2155.0,716.0"/><polyline stroke="#f00010" points="2188.0,430.0 2183.0,465.0 2178.0,475.0 2175.0,488.0 2171.0,524.0 2169.0,596.0 2166.0,686.0"/><polyline stroke="#f00010" points="1996.0,439.0 2079.0,455.0 2126.0,465.0"/><polyline stroke="#f00010" points="2079.0,455.0 2061.0,499.0 2056.0,518.0"/><polyline stroke="#f00010" points="1999.0,442.0 1999.0,482.0 2061.0,499.0"/><polyline stroke="#f00010" points="2031.0,501.0 2059.0,507.0"/><polyline stroke="#f00010" points="2030.0,510.0 2071.0,523.0 2093.0,512.0 2107.0,519.0 2125.0,490.0 2145.0,461.0 2166.0,463.0"/><polyline stroke="#f00010" points="2169.0,430.0 2144.0,444.0 2128.0,465.0 2106.0,493.0 2099.0,496.0 2085.0,491.0 2081.0,482.0 2083.0,472.0 2106.0,430.0"/><polyline stroke="#f00010" points="2125.0,490.0 2135.0,505.0 2161.0,506.0"/><polyline stroke="#f00010" points="2096.0,430.0 2079.0,455.0"/><polyline stroke="#f00010" points="2012.0,439.0 2017.0,430.0"/><polyline stroke="#f00010" points="2184.0,465.0 2244.0,471.0 2225.0,624.0"/><polyline stroke="#f00010" points="2244.0,430.0 2300.0,466.0 2325.0,430.0"/><polyline stroke="#f00010" points="2300.0,466.0 2294.0,490.0 2355.0,526.0 2425.0,556.0"/><polyline stroke="#f00010" points="1996.0,602.0 2095.0,606.0 2123.0,613.0 2157.0,617.0"/><polyline stroke="#f00010" points="2123.0,613.0 2158.0,568.0"/><polyline stroke="#f00010" points="2121.0,523.0 2131.0,528.0 2131.0,557.0 2158.0,557.0"/><polyline stroke="#f00010" points="2170.0,594.0 2196.0,600.0 2212.0,622.0 2425.0,696.0"/><polyline stroke="#f00010" points="2212.0,622.0 2221.0,700.0"/><polyline stroke="#f00010" points="2172.0,524.0 2181.0,525.0 2186.0,538.0 2184.0,597.0"/><polyline stroke="#f00010" points="2178.0,477.0 2187.0,477.0 2187.0,490.0 2175.0,489.0"/><polyline stroke="#f00010" points="2117.0,654.0 2156.0,654.0"/><polyline stroke="#00e600" points="2271.0,467.0 2281.0,459.0 2292.0,469.0 2285.0,478.0 2271.0,467.0"/><polyline stroke="#00e600" points="2003.0,447.0 2004.0,442.0 2015.0,444.0 2014.0,449.0 2003.0,447.0"/><polyline stroke="#00e600" points="2058.0,484.0 2061.0,467.0 2068.0,468.0 2064.0,485.0 2058.0,484.0"/><polyline stroke="#00e600" points="2027.0,521.0 2032.0,503.0 2050.0,507.0 2046.0,526.0 2027.0,521.0"/><polyline stroke="#00e600" points="2083.0,554.0 2083.0,523.0 2121.0,523.0 2119.0,560.0 2107.0,559.0 2105.0,555.0 2083.0,554.0"/><polyline stroke="#00e600" points="2061.0,598.0 2060.0,550.0 2082.0,550.0 2081.0,597.0 2061.0,598.0"/><polyline stroke="#00e600" points="2138.0,494.0 2157.0,495.0 2155.0,525.0 2137.0,525.6 2138.0,494.0"/><polyline stroke="#00e600" points="2184.0,518.0 2186.0,504.0 2199.0,506.0 2197.0,519.0 2184.0,518.0"/><polyline stroke="#00e600" points="2173.0,558.0 2174.0,538.0 2186.0,538.0 2185.0,558.0 2173.0,558.0"/><polyline stroke="#00e600" points="2197.0,553.0 2198.0,535.0 2203.0,536.0 2203.0,544.0 2207.0,545.0 2207.0,553.0 2197.0,553.0"/><polyline stroke="#00e600" points="2179.0,615.0 2180.0,601.0 2192.0,602.0 2191.0,616.0 2179.0,615.0"/><polyline stroke="#00e600" points="2222.0,596.0 2224.0,575.0 2229.0,575.0 2227.0,597.0 2222.0,596.0"/><polyline stroke="#00e600" points="2094.0,615.0 2096.0,608.0 2117.0,613.0 2115.0,622.0 2094.0,615.0"/><polyline stroke="#00e600" points="2168.0,642.0 2169.0,632.0 2184.0,633.0 2186.0,623.0 2201.0,625.0 2197.0,665.0 2175.0,662.0 2175.0,643.0 2168.0,642.0"/><polyline stroke="#00e600" points="2220.0,656.0 2222.0,645.0 2235.0,646.0 2234.0,657.0 2220.0,656.0"/><polyline stroke="#00e600" points="2083.0,680.0 2082.0,665.0 2092.0,664.0 2093.0,679.0 2083.0,680.0"/><polyline stroke="#00e600" points="2113.0,694.0 2116.0,654.0 2147.0,654.0 2145.0,664.0 2133.0,664.0 2131.0,695.0 2113.0,694.0"/><polyline stroke="#00e600" points="2189.0,458.0 2206.0,461.0 2212.0,430.0"/><polyline stroke="#00e600" points="2189.0,458.0 2195.0,430.0"/><polyline stroke="#00e600" points="2244.0,472.0 2294.0,490.0"/><polyline stroke="#00e600" points="2300.0,466.0 2425.0,487.0"/><polyline stroke="#00e600" points="2258.0,638.0 2265.0,716.0"/><polyline stroke="#e6e600" points="2021.0,473.0 2028.0,451.0 2064.0,461.0 2058.0,483.0 2021.0,473.0"/><polyline stroke="#e6e600" points="2142.0,494.0 2143.0,466.0 2160.0,467.0 2156.0,495.0 2142.0,494.0"/><polyline stroke="#e6e600" points="2131.0,556.0 2131.0,528.0 2151.0,528.0 2150.0,556.0 2131.0,556.0"/><polyline stroke="#e6e600" points="2106.0,588.0 2109.0,560.0 2141.0,562.0 2138.0,591.0 2106.0,588.0"/><polyline stroke="#e6e600" points="2188.0,502.0 2190.0,478.0 2211.0,480.0 2211.0,484.0 2221.0,485.0 2218.0,509.0 2188.0,502.0"/><polyline stroke="#e6e600" points="2173.0,582.0 2173.0,558.0 2185.0,558.0 2185.0,582.0 2173.0,582.0"/><polyline stroke="#e6e600" points="2168.0,669.0 2168.0,657.0 2174.0,658.0 2175.0,662.0 2197.0,665.0 2198.0,657.0 2215.0,658.0 2213.0,681.0 2195.0,680.0 2195.0,682.0 2172.0,680.0 2172.0,670.0 2168.0,669.0"/><polyline stroke="#e6e600" points="2041.0,430.0 2043.0,436.0 2064.0,447.0 2073.0,430.0"/><polyline stroke="#e6e600" points="2106.0,430.0 2105.0,437.0 2123.0,443.0 2129.0,430.0"/><polyline stroke="#e6e600" points="2128.0,654.0 2128.0,622.0 2149.0,622.0 2146.0,698.0 2143.0,715.0"/><polyline stroke="#e6e600" points="2120.0,715.0 2122.0,695.0"/><polyline stroke="#f00010" points="2420.0,554.0 2501.0,587.0 2645.0,627.0 2719.0,664.0 2776.0,699.0"/><polyline stroke="#f00010" points="2501.0,587.0 2563.0,520.0 2608.0,472.0 2631.0,452.0 2640.0,448.0"/><polyline stroke="#f00010" points="2645.0,627.0 2723.0,532.0 2684.0,505.0 2699.0,484.0"/><polyline stroke="#f00010" points="2719.0,664.0 2777.0,580.0 2786.0,566.0 2775.0,556.0 2800.0,526.0 2826.0,542.0 2845.0,563.0 2851.0,572.0"/><polyline stroke="#f00010" points="2433.0,558.0 2448.0,489.0 2470.0,450.0 2476.0,436.0"/><polyline stroke="#f00010" points="2420.0,696.0 2464.0,711.0"/><polyline stroke="#f00010" points="2596.0,430.0 2675.0,460.0 2699.0,484.0 2710.0,481.0 2851.0,527.0"/><polyline stroke="#f00010" points="2632.0,430.0 2851.0,516.0"/><polyline stroke="#f00010" points="2675.0,460.0 2800.0,526.0"/><polyline stroke="#f00010" points="2768.0,456.0 2786.0,476.0 2772.0,490.0 2827.0,430.0"/><polyline stroke="#f00010" points="2851.0,668.0 2827.0,645.0 2851.0,608.0"/><polyline stroke="#f00010" points="2820.0,516.0 2851.0,548.0"/><polyline stroke="#f00010" points="2826.0,486.0 2851.0,456.0"/><polyline stroke="#f00010" points="2588.0,448.0 2613.0,456.0 2618.0,438.0 2594.0,431.0"/><polyline stroke="#f00010" points="2588.0,448.0 2596.0,430.0"/><polyline stroke="#f00010" points="2608.0,472.0 2622.0,464.0"/><polyline stroke="#f00010" points="2653.0,437.0 2670.0,433.0 2673.0,443.0 2685.0,451.0"/><polyline stroke="#00e600" points="2474.0,430.0 2492.0,445.0 2490.0,449.0 2506.0,461.0 2509.0,458.0 2520.0,467.0 2529.0,456.0 2498.0,434.0 2496.0,430.0 2474.0,430.0"/><polyline stroke="#00e600" points="2582.0,524.0 2585.0,510.0 2609.0,516.0 2606.0,530.0 2582.0,524.0"/><polyline stroke="#00e600" points="2613.0,494.0 2631.0,469.0 2653.0,483.0 2649.0,490.0 2655.0,495.0 2641.0,515.0 2613.0,494.0"/><polyline stroke="#00e600" points="2589.0,448.0 2595.0,433.0 2615.0,440.0 2609.0,456.0 2589.0,448.0"/><polyline stroke="#00e600" points="2682.0,446.0 2686.0,438.0 2708.0,447.0 2703.0,456.0 2682.0,446.0"/><polyline stroke="#00e600" points="2720.0,540.0 2726.0,532.0 2734.0,539.0 2728.0,548.0 2720.0,540.0"/><polyline stroke="#00e600" points="2735.0,519.0 2746.0,503.0 2764.0,514.0 2752.0,530.0 2735.0,519.0"/><polyline stroke="#00e600" points="2764.0,514.0 2770.0,508.0 2778.0,514.0 2774.0,520.0 2764.0,514.0"/><polyline stroke="#00e600" points="2797.0,495.0 2815.0,474.0 2836.0,491.0 2814.0,510.0 2797.0,495.0"/><polyline stroke="#00e600" points="2776.0,556.0 2800.0,526.0 2819.0,542.0 2812.0,550.0 2821.0,557.0 2801.0,583.0 2782.0,570.0 2776.0,556.0"/><polyline stroke="#00e600" points="2783.0,597.0 2791.0,589.0 2804.0,595.0 2798.0,608.0 2783.0,597.0"/><polyline stroke="#00e600" points="2470.0,450.0 2563.0,520.0 2605.0,530.0 2680.0,583.0"/><polyline stroke="#00e600" points="2420.0,486.0 2448.0,490.0"/><polyline stroke="#00e600" points="2715.0,540.0 2777.0,580.0"/><polyline stroke="#00e600" points="2768.0,593.0 2837.0,630.0"/><polyline stroke="#e6e600" points="2651.0,502.0 2670.0,462.0 2691.0,479.0 2664.0,509.0 2651.0,502.0"/><polyline stroke="#e6e600" points="2706.0,500.0 2716.0,484.0 2745.0,502.0 2736.0,519.0 2706.0,500.0"/><polyline stroke="#e6e600" points="2805.0,578.0 2821.0,557.0 2844.0,576.0 2827.0,597.0 2805.0,578.0"/><polyline stroke="#e6e600" points="2720.0,453.0 2741.0,474.0 2764.0,454.0 2788.0,437.0 2778.0,430.0"/><polyline stroke="#e6e600" points="2744.0,430.0 2764.0,456.0"/><polyline stroke="#e6e600" points="2640.0,430.0 2650.0,436.0 2656.0,430.0"/><g stroke="#20d0e8" stroke-width="1.2"><circle cx="2730" cy="293" r="17"/><path d="M2718 281L2742 305M2742 281L2718 305"/><circle cx="2393" cy="445" r="11"/><path d="M2385 437L2401 453M2401 437L2385 453"/><path d="M2363 461L2369 449L2420 470L2413 484Z M2363 461L2420 470 M2369 449L2413 484"/></g><g stroke="#00d000" stroke-width="1.3"><path d="M2370 491H2376M2351 501H2358M2388 501H2395M2369 512H2376"/></g></g><text transform="translate(2474,225) rotate(0) scale(0.75,1)" font-family="Liberation Sans" font-style="italic" font-size="17" fill="#b070e8">Rehberg</text><text transform="translate(2333,312) rotate(27) scale(0.75,1)" font-family="Liberation Sans" font-style="italic" font-size="12" fill="#d8d8a0">Dorfstr. (Kr FRG 39)</text><text transform="translate(2610,687) rotate(0) scale(0.75,1)" font-family="Liberation Sans" font-style="italic" font-size="11" fill="#a8a8a8">Gemeinde Grainet,Gemarkung Rehberg</text><text transform="translate(1996,699) rotate(0) scale(0.9,1)" font-family="Liberation Sans" font-style="normal" font-size="7" fill="#a0a0a0">ver. Landesvermessungsamt 1958</text><text transform="translate(2445,682) rotate(0) scale(0.9,1)" font-family="Liberation Sans" font-style="normal" font-size="7" fill="#a0a0a0">NO 32 - 65.3</text><text transform="translate(2443,253) rotate(0) scale(0.75,1)" font-family="Liberation Sans" font-style="italic" font-size="7.5" fill="#e08000">33</text><text transform="translate(2536,321) rotate(0) scale(0.75,1)" font-family="Liberation Sans" font-style="italic" font-size="7.5" fill="#e08000">37</text><text transform="translate(2644,299) rotate(0) scale(0.75,1)" font-family="Liberation Sans" font-style="italic" font-size="7.5" fill="#e08000">43</text><text transform="translate(2695,361) rotate(0) scale(0.75,1)" font-family="Liberation Sans" font-style="italic" font-size="7.5" fill="#e08000">47</text><text transform="translate(2450,367) rotate(0) scale(0.75,1)" font-family="Liberation Sans" font-style="italic" font-size="7.5" fill="#e08000">51/1</text><text transform="translate(2478,394) rotate(0) scale(0.75,1)" font-family="Liberation Sans" font-style="italic" font-size="7.5" fill="#e08000">36</text><text transform="translate(2519,397) rotate(0) scale(0.75,1)" font-family="Liberation Sans" font-style="italic" font-size="7.5" fill="#e08000">45/2</text><text transform="translate(2715,406) rotate(0) scale(0.75,1)" font-family="Liberation Sans" font-style="italic" font-size="7.5" fill="#e08000">51</text><text transform="translate(2689,427) rotate(0) scale(0.75,1)" font-family="Liberation Sans" font-style="italic" font-size="7.5" fill="#e08000">50</text><text transform="translate(2781,392) rotate(0) scale(0.75,1)" font-family="Liberation Sans" font-style="italic" font-size="7.5" fill="#e08000">513</text><text transform="translate(2480,626) rotate(0) scale(0.75,1)" font-family="Liberation Sans" font-style="italic" font-size="7.5" fill="#e08000">55</text><text transform="translate(2650,537) rotate(0) scale(0.75,1)" font-family="Liberation Sans" font-style="italic" font-size="7.5" fill="#e08000">53</text><text transform="translate(2739,576) rotate(0) scale(0.75,1)" font-family="Liberation Sans" font-style="italic" font-size="7.5" fill="#e08000">54</text><text transform="translate(2541,476) rotate(0) scale(0.75,1)" font-family="Liberation Sans" font-style="italic" font-size="7.5" fill="#e08000">45</text><text transform="translate(2620,451) rotate(0) scale(0.75,1)" font-family="Liberation Sans" font-style="italic" font-size="7.5" fill="#e08000">46</text><text transform="translate(2663,450) rotate(0) scale(0.75,1)" font-family="Liberation Sans" font-style="italic" font-size="7.5" fill="#e08000">48</text><text transform="translate(2592,458) rotate(0) scale(0.75,1)" font-family="Liberation Sans" font-style="italic" font-size="7.5" fill="#e08000">45/1</text><text transform="translate(2436,458) rotate(0) scale(0.75,1)" font-family="Liberation Sans" font-style="italic" font-size="7.5" fill="#e08000">31</text><text transform="translate(2232,446) rotate(0) scale(0.75,1)" font-family="Liberation Sans" font-style="italic" font-size="7.5" fill="#e08000">55</text><text transform="translate(2203,579) rotate(0) scale(0.75,1)" font-family="Liberation Sans" font-style="italic" font-size="7.5" fill="#e08000">17</text><text transform="translate(2176,591) rotate(0) scale(0.75,1)" font-family="Liberation Sans" font-style="italic" font-size="7.5" fill="#e08000">18</text><text transform="translate(2144,607) rotate(0) scale(0.75,1)" font-family="Liberation Sans" font-style="italic" font-size="7.5" fill="#e08000">15</text><text transform="translate(2174,627) rotate(0) scale(0.75,1)" font-family="Liberation Sans" font-style="italic" font-size="7.5" fill="#e08000">16</text><text transform="translate(2006,555) rotate(0) scale(0.75,1)" font-family="Liberation Sans" font-style="italic" font-size="7.5" fill="#e08000">19</text><text transform="translate(2008,646) rotate(0) scale(0.75,1)" font-family="Liberation Sans" font-style="italic" font-size="7.5" fill="#e08000">14</text><text transform="translate(2120,514) rotate(0) scale(0.75,1)" font-family="Liberation Sans" font-style="italic" font-size="7.5" fill="#e08000">20</text><text transform="translate(2131,493) rotate(0) scale(0.75,1)" font-family="Liberation Sans" font-style="italic" font-size="7.5" fill="#e08000">21</text><text transform="translate(2006,469) rotate(0) scale(0.75,1)" font-family="Liberation Sans" font-style="italic" font-size="7.5" fill="#e08000">20/1</text><text transform="translate(2089,470) rotate(0) scale(0.75,1)" font-family="Liberation Sans" font-style="italic" font-size="7.5" fill="#e08000">20/2</text><text transform="translate(2005,506) rotate(0) scale(0.75,1)" font-family="Liberation Sans" font-style="italic" font-size="7.5" fill="#e08000">25/3</text><text transform="translate(2116,169) rotate(0) scale(0.75,1)" font-family="Liberation Sans" font-style="italic" font-size="7.5" fill="#e08000">253/1</text><text transform="translate(2182,175) rotate(0) scale(0.75,1)" font-family="Liberation Sans" font-style="italic" font-size="7.5" fill="#e08000">253/1</text><text transform="translate(2257,192) rotate(0) scale(0.75,1)" font-family="Liberation Sans" font-style="italic" font-size="7.5" fill="#e08000">252</text><text transform="translate(2330,221) rotate(0) scale(0.75,1)" font-family="Liberation Sans" font-style="italic" font-size="7.5" fill="#e08000">27/2</text><text transform="translate(2400,220) rotate(0) scale(0.75,1)" font-family="Liberation Sans" font-style="italic" font-size="7.5" fill="#e08000">34</text><text transform="translate(2085,244) rotate(0) scale(0.75,1)" font-family="Liberation Sans" font-style="italic" font-size="7.5" fill="#e08000">26b</text><text transform="translate(2048,312) rotate(0) scale(0.75,1)" font-family="Liberation Sans" font-style="italic" font-size="7.5" fill="#e08000">26</text><text transform="translate(2107,300) rotate(0) scale(0.75,1)" font-family="Liberation Sans" font-style="italic" font-size="7.5" fill="#e08000">25</text><text transform="translate(2175,280) rotate(0) scale(0.75,1)" font-family="Liberation Sans" font-style="italic" font-size="7.5" fill="#e08000">27</text><text transform="translate(2262,330) rotate(0) scale(0.75,1)" font-family="Liberation Sans" font-style="italic" font-size="7.5" fill="#e08000">33</text><text transform="translate(2380,326) rotate(0) scale(0.75,1)" font-family="Liberation Sans" font-style="italic" font-size="7.5" fill="#e08000">32</text><text transform="translate(2190,406) rotate(0) scale(0.75,1)" font-family="Liberation Sans" font-style="italic" font-size="7.5" fill="#e08000">23</text><text transform="translate(2277,404) rotate(0) scale(0.75,1)" font-family="Liberation Sans" font-style="italic" font-size="7.5" fill="#e08000">28</text><text transform="translate(2167,291) rotate(20) scale(0.75,1)" font-family="Liberation Sans" font-style="italic" font-size="8" fill="#e05020">Kapelle</text><text transform="translate(2187,475) rotate(0) scale(0.75,1)" font-family="Liberation Sans" font-style="italic" font-size="8" fill="#20a020">Parkpl.</text><text transform="translate(2066,507) rotate(15) scale(0.75,1)" font-family="Liberation Sans" font-style="italic" font-size="7.5" fill="#d0a000">Kapellenweg</text></svg><div class="a" style="left:1997px;top:157px;width:38px;height:39px;background:rgba(50,50,50,0.6)"></div><div class="a" style="left:2002px;top:163px;width:27px;height:29px;background:rgba(80,80,80,0.6)"></div><div class="menu" style="left:503px;top:206px;width:252px;height:649px"></div><div class="strip" style="left:506px;top:209px;height:644px"></div><div class="mi" style="left:552px;top:209px;width:197px"><span class="sc" style="left:60.5px"><u>F</u>ile</span><div class="arr" style="left:181px"></div></div><div class="mi" style="left:552px;top:255px;width:197px"><span class="sc" style="left:60.5px"><u>E</u>dit</span><div class="arr" style="left:181px"></div></div><div class="mi" style="left:552px;top:301px;width:197px"><span class="sc" style="left:60.5px"><u>M</u>anage</span><div class="arr" style="left:181px"></div></div><div class="mi" style="left:552px;top:347px;width:197px"><span class="sc" style="left:60.5px">Modif<u>y</u></span><div class="arr" style="left:181px"></div></div><div class="mi hl" style="left:552px;top:393px;width:197px"><span class="sc" style="left:60.5px"><u>D</u>raw</span><div class="arr" style="left:181px"></div></div><div class="mi" style="left:552px;top:439px;width:197px"><span class="sc" style="left:60.5px">C<u>o</u>nstruct</span><div class="arr" style="left:181px"></div></div><div class="mi" style="left:552px;top:485px;width:197px"><span class="sc" style="left:60.5px"><u>T</u>rim</span><div class="arr" style="left:181px"></div></div><div class="mi" style="left:552px;top:531px;width:197px"><span class="sc" style="left:60.5px"><u>A</u>nnotate</span><div class="arr" style="left:181px"></div></div><div class="mi" style="left:552px;top:577px;width:197px"><span class="sc" style="left:60.5px"><u>L</u>ibrary</span><div class="arr" style="left:181px"></div></div><div class="mi" style="left:552px;top:623px;width:197px"><span class="sc" style="left:60.5px">Extr<u>a</u></span><div class="arr" style="left:181px"></div></div><div class="mi" style="left:552px;top:669px;width:197px"><span class="sc" style="left:60.5px"><u>3</u>D</span><div class="arr" style="left:181px"></div></div><div class="mi" style="left:552px;top:715px;width:197px"><span class="sc" style="left:60.5px"><u>C</u>AM</span><div class="arr" style="left:181px"></div></div><div class="mi" style="left:552px;top:761px;width:197px"><span class="sc" style="left:60.5px"><u>W</u>indow</span><div class="arr" style="left:181px"></div></div><div class="mi" style="left:552px;top:807px;width:197px"><span class="sc" style="left:60.5px"><u>H</u>elp</span><div class="arr" style="left:181px"></div></div><div class="menu" style="left:749px;top:390px;width:446px;height:884px"></div><div class="strip" style="left:752px;top:393px;height:460px"></div><div class="sep" style="left:752px;width:440px;top:861px"></div><div class="strip" style="left:752px;top:870px;height:138px"></div><div class="sep" style="left:752px;width:440px;top:1016px"></div><div class="strip" style="left:752px;top:1025px;height:46px"></div><div class="sep" style="left:752px;width:440px;top:1079px"></div><div class="strip" style="left:752px;top:1088px;height:184px"></div><div class="mi" style="left:798px;top:393px;width:391px"><span class="sc" style="left:60.5px"><u>L</u>ine</span><span class="sc" style="right:34px">L</span><div class="arr" style="left:375px"></div></div><div class="mi" style="left:798px;top:439px;width:391px"><span class="sc" style="left:60.5px">Tan<u>g</u>ent</span><span class="sc" style="right:34px">G</span><div class="arr" style="left:375px"></div></div><div class="mi hl" style="left:798px;top:485px;width:391px"><span class="sc" style="left:60.5px"><u>P</u>olygon</span><span class="sc" style="right:34px">P</span><div class="arr" style="left:375px"></div></div><div class="mi" style="left:798px;top:531px;width:391px"><span class="sc" style="left:60.5px">Regular Pol<u>y</u>gon</span><div class="arr" style="left:375px"></div></div><div class="mi" style="left:798px;top:577px;width:391px"><span class="sc" style="left:60.5px"><u>C</u>ircle</span><span class="sc" style="right:34px">K</span><div class="arr" style="left:375px"></div></div><div class="mi" style="left:798px;top:623px;width:391px"><span class="sc" style="left:60.5px">Circle <u>A</u>rc</span><span class="sc" style="right:34px">O</span><div class="arr" style="left:375px"></div></div><div class="mi" style="left:798px;top:669px;width:391px"><span class="sc" style="left:60.5px"><u>E</u>llipse</span><div class="arr" style="left:375px"></div></div><div class="mi" style="left:798px;top:715px;width:391px"><span class="sc" style="left:60.5px">Ellipse A<u>r</u>c</span><div class="arr" style="left:375px"></div></div><div class="mi" style="left:798px;top:761px;width:391px"><span class="sc" style="left:60.5px">Arc <u>M</u>ode</span><span class="sc" style="right:34px">Shift+O</span><div class="arr" style="left:375px"></div></div><div class="mi" style="left:798px;top:807px;width:391px"><span class="sc" style="left:60.5px">Bé<u>z</u>ier Curve</span><div class="arr" style="left:375px"></div></div><div class="mi" style="left:798px;top:870px;width:391px"><span class="sc" style="left:60.5px"><u>F</u>reehand Line</span></div><div class="mi" style="left:798px;top:916px;width:391px"><span class="sc" style="left:60.5px">Spl<u>i</u>ne</span></div><div class="mi" style="left:798px;top:962px;width:391px"><span class="sc" style="left:60.5px">Parallel Outline (E<u>q</u>uidistant)</span></div><div class="mi" style="left:798px;top:1025px;width:391px"><span class="sc" style="left:60.5px"><u>H</u>atching</span><span class="sc" style="right:34px">R</span><div class="arr" style="left:375px"></div></div><div class="mi" style="left:798px;top:1088px;width:391px"><span class="sc" style="left:60.5px">Advanced Drawing</span><div class="arr" style="left:375px"></div></div><div class="mi" style="left:798px;top:1134px;width:391px"><span class="sc" style="left:60.5px">Create Graph...</span></div><div class="mi" style="left:798px;top:1180px;width:391px"><span class="sc" style="left:60.5px">Sample Plug-In</span><div class="arr" style="left:375px"></div></div><div class="mi" style="left:798px;top:1226px;width:391px"><span class="sc" style="left:60.5px">Texture / Color Gradient</span><div class="arr" style="left:375px"></div></div><div class="menu" style="left:1190px;top:482px;width:433px;height:453px"></div><div class="strip" style="left:1193px;top:485px;height:138px"></div><div class="sep" style="left:1193px;width:427px;top:631px"></div><div class="strip" style="left:1193px;top:640px;height:184px"></div><div class="sep" style="left:1193px;width:427px;top:832px"></div><div class="strip" style="left:1193px;top:841px;height:92px"></div><div class="mi" style="left:1239px;top:485px;width:381px"><span class="sc" style="left:59px"><u>1</u>  Triangle</span></div><div class="mi" style="left:1239px;top:531px;width:381px"><span class="sc" style="left:59px"><u>2</u>  Quadrangle</span></div><div class="mi" style="left:1239px;top:577px;width:381px"><span class="sc" style="left:59px"><u>3</u>  Parallelogram</span></div><div class="mi" style="left:1239px;top:640px;width:381px"><span class="sc" style="left:59px"><u>4</u>  Rectangle</span></div><div class="mi" style="left:1239px;top:686px;width:381px"><span class="sc" style="left:59px"><u>6</u>   - Centered</span></div><div class="mi" style="left:1239px;top:732px;width:381px"><span class="sc" style="left:59px"><u>7</u>   - Rotated</span></div><div class="mi" style="left:1239px;top:778px;width:381px"><span class="sc" style="left:59px"><u>8</u>   - 3 Points</span></div><div class="mi hl" style="left:1239px;top:841px;width:381px"><span class="sc" style="left:59px"><u>5</u>  Freeform / Surface</span></div><div class="mi" style="left:1239px;top:887px;width:381px"><span class="sc" style="left:59px"><u>9</u>  Contour Tracking Surface</span></div><svg style="left:0;top:0" width="2860" height="1610"><g transform="translate(505,209)"><rect x="8" y="10" width="33" height="33" rx="3" fill="#5262b4" stroke="#37438c" stroke-width="1.2"/><rect x="12" y="10.5" width="25" height="17" fill="#fff"/><rect x="17" y="32" width="17" height="10" fill="#d8d8e0"/><rect x="20" y="34" width="4" height="7" fill="#37438c"/></g><g transform="translate(505,255)"><rect x="15" y="13" width="26" height="31" rx="2" fill="#f2d25a" stroke="#c8a838"/><path d="M12 14H36V36C33 40 28 42 8 43C14 38 12 30 12 14Z" fill="#f4f4f4" stroke="#aaa" stroke-width=".8"/><rect x="23" y="8" width="8" height="6" fill="#bbb" stroke="#777" stroke-width=".8"/></g><g transform="translate(505,301)"><rect x="9" y="9" width="31" height="28" fill="#e6e6e6" stroke="#888" stroke-width="1"/><rect x="12" y="12" width="25" height="22" fill="#86bce6"/><rect x="14" y="15" width="12" height="6" fill="#fff" stroke="#777" stroke-width=".6"/><rect x="20" y="20" width="13" height="6" fill="#fff" stroke="#777" stroke-width=".6"/><rect x="16" y="26" width="13" height="5" fill="#fff" stroke="#777" stroke-width=".6"/><rect x="20" y="37" width="9" height="4" fill="#ccc"/><rect x="9" y="41" width="31" height="2.5" fill="#ddd"/></g><g transform="translate(505,347)"><path d="M8 22H17V12H25V34H8Z" fill="#d6d6d6" stroke="#999" stroke-width="1"/><path d="M25 32H34V24H42V44H25Z" fill="#f4f6fa" stroke="#1a70c0" stroke-width="2"/><path d="M30 12L37 19M12 36L19 43" stroke="#111" stroke-width="1.5"/><path d="M37 19L37 15L33 19Z M19 43L19 39L15 43Z" fill="#111"/></g><g transform="translate(505,393)"><line x1="9" y1="41" x2="40" y2="14" stroke="#1a70c0" stroke-width="2.5"/><rect x="6.5" y="38.5" width="5" height="5" fill="#fff" stroke="#1a6ec0" stroke-width="1.5"/><rect x="37.5" y="11.5" width="5" height="5" fill="#fff" stroke="#1a6ec0" stroke-width="1.5"/></g><g transform="translate(505,439)"><path d="M23 8L12 42M23 8L33 40M10 33C18 24 32 24 38 30" stroke="#1aa02a" stroke-width="3.2" fill="none" stroke-linecap="round"/></g><g transform="translate(505,485)"><path d="M8 14L34 34M8 34L30 18" stroke="#c81020" stroke-width="3.5" stroke-linecap="round"/><circle cx="37" cy="15" r="5" fill="none" stroke="#c81020" stroke-width="2.2"/><circle cx="37" cy="35" r="5" fill="none" stroke="#c81020" stroke-width="2.2"/></g><g transform="translate(505,531)"><path d="M9 12L40 42M5 17L14 8M35 46L45 37" stroke="#111" stroke-width="1.8"/><path d="M9 12L15 14L11 18Z M40 42L34 40L38 36Z" fill="#111"/><text x="24" y="24" transform="rotate(45 27 22)" font-family="Liberation Sans" font-size="11" fill="#111">3,5</text></g><g transform="translate(505,577)"><rect x="13" y="8" width="21" height="9" rx="2" fill="#e4e4e4" stroke="#999"/><rect x="17" y="17" width="13" height="24" fill="#e0e0e0" stroke="#999"/><path d="M17 23H30M17 29H30M17 35H30" stroke="#aaa" stroke-width="1"/></g><g transform="translate(505,623)"><rect x="8" y="9" width="32" height="32" rx="2" fill="#efe9dc" stroke="#b8b0a0" stroke-width="1.4"/><rect x="12" y="13" width="24" height="24" fill="#f6f2ea"/><path d="M24 16L31 24H27V33H21V24H17Z" fill="#000"/></g><g transform="translate(505,669)"><path d="M23 8L40 16V36L23 44L7 36V16Z" fill="#f8d8a8" stroke="#000" stroke-width="2"/><path d="M23 24L40 16V36L23 44Z" fill="#f0f0a0" stroke="#000" stroke-width="1.5"/><path d="M7 16L23 8L40 16L23 24Z" fill="#d8ecfa" stroke="#000" stroke-width="1.5"/></g><g transform="translate(505,715)"><circle cx="23.5" cy="25" r="16" fill="#e8105a"/><path d="M23.5 7L27 12L33 9L33 15L40 17L36 22L41 27L35 30L37 36L31 36L29 43L24 39L18 43L17 37L10 37L12 31L6 27L11 23L8 17L15 16L15 10L21 12Z" fill="#e8105a"/><circle cx="23.5" cy="25" r="9.5" fill="#f4f4f4" stroke="#555" stroke-width="1.2"/><path d="M23.5 19V31M17.5 25H29.5" stroke="#444" stroke-width="1.6"/></g><g transform="translate(505,761)"><rect x="8" y="11" width="32" height="28" fill="#b88a4a"/><rect x="11" y="14" width="12" height="22" fill="#c8f4f8"/><rect x="25" y="14" width="12" height="22" fill="#c8f4f8"/><path d="M11 14L20 17V34L11 36Z" fill="#fff" opacity=".8"/></g><g transform="translate(505,807)"><path d="M15 17C15 9 33 8 33 17C33 24 25 24 25 31" stroke="#000" stroke-width="8" fill="none" stroke-linecap="round"/><path d="M15 17C15 9 33 8 33 17C33 24 25 24 25 31" stroke="#ffe800" stroke-width="5" fill="none" stroke-linecap="round"/><circle cx="25" cy="39" r="4.5" fill="#ffe800" stroke="#000" stroke-width="1.5"/></g></svg><svg style="left:0;top:0" width="2860" height="1610"><g transform="translate(752,393)"><line x1="10" y1="30" x2="40" y2="12" stroke="#1a70c0" stroke-width="2"/><rect x="7.75" y="27.75" width="4.5" height="4.5" fill="#fff" stroke="#1a6ec0" stroke-width="1.4"/><rect x="37.75" y="9.75" width="4.5" height="4.5" fill="#fff" stroke="#1a6ec0" stroke-width="1.4"/><path d="M33 45L45 45L45 33Z" fill="#ff6a00"/></g><g transform="translate(752,439)"><path d="M10 28A9 9 0 1 0 20 38M38 12A10 10 0 0 0 34 34" stroke="#f0c000" stroke-width="2" fill="none"/><line x1="10" y1="24" x2="38" y2="16" stroke="#1a70c0" stroke-width="2"/><text x="9" y="36" font-family="Liberation Sans" font-weight="bold" font-size="9" fill="#111">ID</text><text x="27" y="27" font-family="Liberation Sans" font-weight="bold" font-size="9" fill="#111">ID</text><rect x="8.0" y="22.0" width="4" height="4" fill="#fff" stroke="#1a6ec0" stroke-width="1.4"/><rect x="34.0" y="14.0" width="4" height="4" fill="#fff" stroke="#1a6ec0" stroke-width="1.4"/><path d="M33 45L45 45L45 33Z" fill="#ff6a00"/></g><g transform="translate(752,485)"><path d="M9 39L25 10H40L27 39Z" fill="#f4f6fa" stroke="#1a70c0" stroke-width="2"/><rect x="23.0" y="8.0" width="4" height="4" fill="#fff" stroke="#1a6ec0" stroke-width="1.4"/><rect x="38.0" y="8.0" width="4" height="4" fill="#fff" stroke="#1a6ec0" stroke-width="1.4"/><rect x="7.0" y="37.0" width="4" height="4" fill="#fff" stroke="#1a6ec0" stroke-width="1.4"/><rect x="25.0" y="37.0" width="4" height="4" fill="#fff" stroke="#1a6ec0" stroke-width="1.4"/><path d="M33 45L45 45L45 33Z" fill="#ff6a00"/></g><g transform="translate(752,531)"><path d="M10 25L17 13H31L38 25L31 37H17Z" fill="#f4f6fa" stroke="#1a70c0" stroke-width="2"/><rect x="22.0" y="23.0" width="4" height="4" fill="#fff" stroke="#1a6ec0" stroke-width="1.2"/><rect x="29.0" y="11.0" width="4" height="4" fill="#fff" stroke="#1a6ec0" stroke-width="1.4"/><rect x="36.0" y="23.0" width="4" height="4" fill="#fff" stroke="#1a6ec0" stroke-width="1.4"/><path d="M33 45L45 45L45 33Z" fill="#ff6a00"/></g><g transform="translate(752,577)"><circle cx="23" cy="24" r="16" fill="#f4f6fa" stroke="#1a70c0" stroke-width="2.2"/><rect x="21.0" y="22.0" width="4" height="4" fill="#fff" stroke="#1a6ec0" stroke-width="1.2"/><rect x="32.0" y="11.0" width="4" height="4" fill="#fff" stroke="#1a6ec0" stroke-width="1.4"/><path d="M33 45L45 45L45 33Z" fill="#ff6a00"/></g><g transform="translate(752,623)"><path d="M10 39H38V10" stroke="#aaa" stroke-width="1" fill="none"/><path d="M10 39C10 22 20 11 38 10" stroke="#1a70c0" stroke-width="2" fill="none"/><rect x="8.0" y="37.0" width="4" height="4" fill="#fff" stroke="#1a6ec0" stroke-width="1.4"/><rect x="15.0" y="18.0" width="4" height="4" fill="#fff" stroke="#1a6ec0" stroke-width="1.4"/><rect x="36.0" y="8.0" width="4" height="4" fill="#fff" stroke="#1a6ec0" stroke-width="1.4"/><path d="M33 45L45 45L45 33Z" fill="#ff6a00"/></g><g transform="translate(752,669)"><path d="M29 11H38V20" stroke="#aaa" stroke-width="1" fill="none"/><ellipse cx="23" cy="27" rx="16" ry="11" fill="#f4f6fa" stroke="#1a70c0" stroke-width="2.2"/><rect x="21.0" y="25.0" width="4" height="4" fill="#fff" stroke="#1a6ec0" stroke-width="1.2"/><rect x="36.0" y="9.0" width="4" height="4" fill="#fff" stroke="#1a6ec0" stroke-width="1.4"/><path d="M33 45L45 45L45 33Z" fill="#ff6a00"/></g><g transform="translate(752,715)"><path d="M27 10L17 27L26 32" stroke="#aaa" stroke-width="1" fill="none"/><path d="M32 16C20 10 6 30 11 38C14 43 26 38 32 31" stroke="#1a70c0" stroke-width="2" fill="none"/><rect x="25.0" y="8.0" width="4" height="4" fill="#fff" stroke="#1a6ec0" stroke-width="1.4"/><rect x="15.0" y="25.0" width="4" height="4" fill="#fff" stroke="#1a6ec0" stroke-width="1.4"/><rect x="24.0" y="30.0" width="4" height="4" fill="#fff" stroke="#1a6ec0" stroke-width="1.4"/><rect x="9.0" y="36.0" width="4" height="4" fill="#fff" stroke="#1a6ec0" stroke-width="1.4"/><rect x="30.0" y="24.0" width="4" height="4" fill="#fff" stroke="#1a6ec0" stroke-width="1.4"/><path d="M33 45L45 45L45 33Z" fill="#ff6a00"/></g><g transform="translate(752,761)"><path d="M6 20C16 8 32 8 42 20L24 40Z" fill="#ffcc90" stroke="#fff" stroke-width="2.2"/><path d="M6 20C16 8 32 8 42 20" stroke="#666" stroke-width="1" fill="none"/><path d="M33 45L45 45L45 33Z" fill="#ff6a00"/></g><g transform="translate(752,807)"><path d="M13 9H37M10 39H30" stroke="#aaa" stroke-width="1.2"/><path d="M10 39C24 39 22 9 37 9" stroke="#1a70c0" stroke-width="2" fill="none"/><rect x="11.0" y="7.0" width="4" height="4" fill="#fff" stroke="#1a6ec0" stroke-width="1.4"/><rect x="35.0" y="7.0" width="4" height="4" fill="#fff" stroke="#1a6ec0" stroke-width="1.4"/><rect x="8.0" y="37.0" width="4" height="4" fill="#fff" stroke="#1a6ec0" stroke-width="1.4"/><rect x="28.0" y="37.0" width="4" height="4" fill="#fff" stroke="#1a6ec0" stroke-width="1.4"/><path d="M33 45L45 45L45 33Z" fill="#ff6a00"/></g><g transform="translate(752,870)"><path d="M24 10C30 6 30 18 38 18C44 28 34 40 27 36C22 44 12 40 12 36C4 30 6 10 24 10Z" stroke="#1a70c0" stroke-width="2" fill="none"/><rect x="22.0" y="8.0" width="4" height="4" fill="#fff" stroke="#1a6ec0" stroke-width="1.4"/><rect x="10.0" y="18.0" width="4" height="4" fill="#fff" stroke="#1a6ec0" stroke-width="1.4"/><rect x="36.0" y="24.0" width="4" height="4" fill="#fff" stroke="#1a6ec0" stroke-width="1.4"/><rect x="15.0" y="34.0" width="4" height="4" fill="#fff" stroke="#1a6ec0" stroke-width="1.4"/><rect x="28.0" y="34.0" width="4" height="4" fill="#fff" stroke="#1a6ec0" stroke-width="1.4"/></g><g transform="translate(752,916)"><path d="M9 34C12 40 18 40 22 36L30 36L26 26L34 22L39 28M30 12L26 18L18 22L14 28" stroke="#1a70c0" stroke-width="2" fill="none"/><rect x="7.0" y="32.0" width="4" height="4" fill="#fff" stroke="#1a6ec0" stroke-width="1.4"/><rect x="20.0" y="35.0" width="4" height="4" fill="#fff" stroke="#1a6ec0" stroke-width="1.4"/><rect x="28.0" y="34.0" width="4" height="4" fill="#fff" stroke="#1a6ec0" stroke-width="1.4"/><rect x="24.0" y="24.0" width="4" height="4" fill="#fff" stroke="#1a6ec0" stroke-width="1.4"/><rect x="32.0" y="19.0" width="4" height="4" fill="#fff" stroke="#1a6ec0" stroke-width="1.4"/><rect x="37.0" y="25.0" width="4" height="4" fill="#fff" stroke="#1a6ec0" stroke-width="1.4"/><rect x="28.0" y="10.0" width="4" height="4" fill="#fff" stroke="#1a6ec0" stroke-width="1.4"/><rect x="12.0" y="26.0" width="4" height="4" fill="#fff" stroke="#1a6ec0" stroke-width="1.4"/></g><g transform="translate(752,962)"><path d="M8 24L22 8H29V22L40 34L36 42H20L30 28L24 22L10 36" stroke="#f0c000" stroke-width="2.4" fill="none"/><path d="M21 36L28 24L34 36Z" stroke="#1a70c0" stroke-width="2" fill="none"/><text x="6" y="42" font-family="Liberation Sans" font-weight="bold" font-size="8" fill="#111">ID</text><text x="33" y="18" font-family="Liberation Sans" font-weight="bold" font-size="7" fill="#111">-x</text></g><g transform="translate(752,1025)"><rect x="8" y="12" width="30" height="26" fill="none" stroke="#e0105a" stroke-width="2" stroke-dasharray="4,2"/><path d="M12 14L22 24M18 13L36 31M28 13L37 22M10 25L23 37M16 20L33 37" stroke="#1a80c8" stroke-width="1.5"/><path d="M33 45L45 45L45 33Z" fill="#ff6a00"/></g><g transform="translate(752,1088)"><path d="M12 30C4 22 20 6 32 12C40 18 36 30 28 36C20 42 14 34 12 30Z" stroke="#1a70c0" stroke-width="2" fill="none"/><path d="M8 8L40 40M40 8L8 40" stroke="#bbb" stroke-width="1"/><path d="M33 45L45 45L45 33Z" fill="#ff6a00"/></g><g transform="translate(752,1134)"><path d="M6 32H42M24 8V46" stroke="#aaa" stroke-width="1"/><path d="M6 27C12 10 18 10 24 27C30 44 36 44 42 27" stroke="#1a70c0" stroke-width="2" fill="none"/></g><g transform="translate(752,1180)"><path d="M24 6L28 14L36 10L34 19L42 22L35 27L40 35L31 34L30 42L24 36L17 42L16 34L7 35L12 27L5 22L13 19L11 10L19 14Z" stroke="#1a70c0" stroke-width="1.8" fill="none"/><rect x="28.5" y="13.5" width="3" height="3" fill="#fff" stroke="#1a6ec0" stroke-width="1.4"/><rect x="20.5" y="18.5" width="3" height="3" fill="#fff" stroke="#1a6ec0" stroke-width="1.4"/><rect x="34.5" y="10.5" width="3" height="3" fill="#fff" stroke="#1a6ec0" stroke-width="1.4"/><path d="M33 45L45 45L45 33Z" fill="#ff6a00"/></g><g transform="translate(752,1226)"><path d="M20 18L34 8L44 20L30 32Z" fill="#e8e8e8" stroke="#888" stroke-width="1"/><ellipse cx="38" cy="14" rx="6" ry="4" fill="#fff" stroke="#666"/><path d="M20 18C12 22 8 32 12 44" stroke="#e05030" stroke-width="4" fill="none"/><path d="M8 42H20" stroke="#e05030" stroke-width="3"/><path d="M33 45L45 45L45 33Z" fill="#ff6a00"/></g></svg><svg style="left:0;top:0" width="2860" height="1610"><g transform="translate(1192,485)"><path d="M14 8L41 29L9 42Z" fill="#f4f6fa" stroke="#1a70c0" stroke-width="2"/><rect x="12.0" y="6.0" width="4" height="4" fill="#fff" stroke="#1a6ec0" stroke-width="1.4"/><rect x="39.0" y="27.0" width="4" height="4" fill="#fff" stroke="#1a6ec0" stroke-width="1.4"/><rect x="7.0" y="40.0" width="4" height="4" fill="#fff" stroke="#1a6ec0" stroke-width="1.4"/></g><g transform="translate(1192,531)"><path d="M8 11L30 4L35 37L13 38Z" fill="#f4f6fa" stroke="#1a70c0" stroke-width="2"/><rect x="6.0" y="9.0" width="4" height="4" fill="#fff" stroke="#1a6ec0" stroke-width="1.4"/><rect x="28.0" y="2.0" width="4" height="4" fill="#fff" stroke="#1a6ec0" stroke-width="1.4"/><rect x="33.0" y="35.0" width="4" height="4" fill="#fff" stroke="#1a6ec0" stroke-width="1.4"/><rect x="11.0" y="36.0" width="4" height="4" fill="#fff" stroke="#1a6ec0" stroke-width="1.4"/></g><g transform="translate(1192,577)"><path d="M9 41L21 11H40L27 41Z" fill="#f4f6fa" stroke="#1a70c0" stroke-width="2"/><rect x="19.0" y="9.0" width="4" height="4" fill="#fff" stroke="#1a6ec0" stroke-width="1.4"/><rect x="38.0" y="9.0" width="4" height="4" fill="#fff" stroke="#1a6ec0" stroke-width="1.4"/><rect x="7.0" y="39.0" width="4" height="4" fill="#fff" stroke="#1a6ec0" stroke-width="1.4"/><rect x="25.0" y="39.0" width="4" height="4" fill="#fff" stroke="#1a6ec0" stroke-width="1.4"/></g><g transform="translate(1192,640)"><rect x="7" y="9" width="32" height="28" fill="#f4f6fa" stroke="#1a70c0" stroke-width="2.2"/><rect x="5.0" y="7.0" width="4" height="4" fill="#fff" stroke="#1a6ec0" stroke-width="1.4"/><rect x="37.0" y="7.0" width="4" height="4" fill="#fff" stroke="#1a6ec0" stroke-width="1.4"/><rect x="5.0" y="35.0" width="4" height="4" fill="#fff" stroke="#1a6ec0" stroke-width="1.4"/><rect x="37.0" y="35.0" width="4" height="4" fill="#fff" stroke="#1a6ec0" stroke-width="1.4"/></g><g transform="translate(1192,686)"><rect x="7" y="11" width="32" height="24" fill="#f4f6fa" stroke="#1a70c0" stroke-width="2.2"/><rect x="21.25" y="21.25" width="3.5" height="3.5" fill="#fff" stroke="#1a6ec0" stroke-width="1.2"/><rect x="37.0" y="9.0" width="4" height="4" fill="#fff" stroke="#1a6ec0" stroke-width="1.4"/><rect x="5.0" y="33.0" width="4" height="4" fill="#fff" stroke="#1a6ec0" stroke-width="1.4"/><rect x="5.0" y="9.0" width="4" height="4" fill="#fff" stroke="#1a6ec0" stroke-width="1.4"/></g><g transform="translate(1192,732)"><rect x="8" y="13" width="30" height="25" fill="none" stroke="#999" stroke-width="1"/><path d="M6 26L25 8L40 23L21 41Z" fill="#f4f6fa" stroke="#1a70c0" stroke-width="2"/><path d="M22 25L38 11" stroke="#999" stroke-width="1"/><rect x="20.25" y="23.25" width="3.5" height="3.5" fill="#fff" stroke="#1a6ec0" stroke-width="1.2"/><rect x="36.25" y="9.25" width="3.5" height="3.5" fill="#fff" stroke="#1a6ec0" stroke-width="1.4"/></g><g transform="translate(1192,778)"><path d="M6 25L25 7L40 22L21 41Z" fill="#f4f6fa" stroke="#1a70c0" stroke-width="2"/><rect x="4.0" y="23.0" width="4" height="4" fill="#fff" stroke="#1a6ec0" stroke-width="1.4"/><rect x="19.0" y="39.0" width="4" height="4" fill="#fff" stroke="#1a6ec0" stroke-width="1.4"/><rect x="31.0" y="12.0" width="4" height="4" fill="#fff" stroke="#1a6ec0" stroke-width="1.4"/></g><g transform="translate(1192,841)"><path d="M9 15L21 6L39 16L31 24C26 22 18 20 18 30C22 36 32 30 39 36L9 38Z" fill="#f4f6fa" stroke="#1a70c0" stroke-width="2"/><rect x="7.0" y="13.0" width="4" height="4" fill="#fff" stroke="#1a6ec0" stroke-width="1.4"/><rect x="19.0" y="4.0" width="4" height="4" fill="#fff" stroke="#1a6ec0" stroke-width="1.4"/><rect x="37.0" y="14.0" width="4" height="4" fill="#fff" stroke="#1a6ec0" stroke-width="1.4"/><rect x="29.0" y="22.0" width="4" height="4" fill="#fff" stroke="#1a6ec0" stroke-width="1.4"/><rect x="37.0" y="34.0" width="4" height="4" fill="#fff" stroke="#1a6ec0" stroke-width="1.4"/><rect x="7.0" y="36.0" width="4" height="4" fill="#fff" stroke="#1a6ec0" stroke-width="1.4"/></g><g transform="translate(1192,887)"><path d="M5 25L42 25M24 5V45" stroke="#a0c080" stroke-width="1"/><path d="M10 36L26 18C36 18 40 28 36 34L24 44Z" fill="#f4f6fa" stroke="#1a70c0" stroke-width="2"/><text x="7" y="15" font-family="Liberation Sans" font-weight="bold" font-size="8" fill="#111">ID</text><text x="30" y="13" font-family="Liberation Sans" font-weight="bold" font-size="8" fill="#111">ID</text><text x="3" y="28" font-family="Liberation Sans" font-weight="bold" font-size="8" fill="#111">ID</text><text x="6" y="44" font-family="Liberation Sans" font-weight="bold" font-size="8" fill="#111">ID</text><text x="28" y="44" font-family="Liberation Sans" font-weight="bold" font-size="8" fill="#111">ID</text></g></svg><div class="fld" style="left:132px;top:1565px;width:256px;letter-spacing:0.15px;padding-left:3px">x: <b>4619351,2013</b> m</div><div class="fld" style="left:394px;top:1565px;width:256px;letter-spacing:0.15px;padding-left:3px">y: <b>5407678,0865</b> m</div><div class="fld" style="left:656px;top:1565px;width:256px;letter-spacing:0.15px;padding-left:3px">Used: <b>11,3</b> MiB</div><div class="fld" style="left:918px;top:1565px;width:780px;letter-spacing:0.62px;padding-left:3px">Command: Line &gt; Point - Point</div><div class="fld" style="left:1703px;top:1565px;width:522px;letter-spacing:0.46px;padding-left:3px">Input: Enter Start Point</div><div class="fld" style="left:2231px;top:1565px;width:521px;letter-spacing:0.67px;padding-left:38px">Notifications [0 new, click here]</div><svg style="left:2755px;top:1560px" width="52" height="50"><path d="M3 4L37 2C36 14 38 28 46 42L8 44C4 32 3 18 3 4Z" fill="#fdfcf0" stroke="#ddd" stroke-width="1"/><path d="M14 36L13 12L27 34L28 8" stroke="#9a9a9a" stroke-width="3" fill="none" stroke-linecap="round" stroke-linejoin="round"/></svg><svg style="left:2808px;top:1558px" width="36" height="50"><path d="M18 3C8 3 3 10 3 17C3 24 9 28 10 34V44C10 47 26 47 26 44V34C27 28 33 24 33 17C33 10 28 3 18 3Z" fill="#fff" stroke="#fff" stroke-width="2"/><path d="M18 6C10 6 6 12 6 17C6 23 12 27 12 33H24C24 27 30 23 30 17C30 12 26 6 18 6Z" fill="#fbf3c8"/><path d="M14 22L16 33M22 22L20 33M14 22H22" stroke="#f0a080" stroke-width="1" fill="none"/><rect x="12" y="35" width="12" height="9" fill="#e8e8e8" stroke="#bbb" stroke-width="0.8"/></svg></div></body></html>
